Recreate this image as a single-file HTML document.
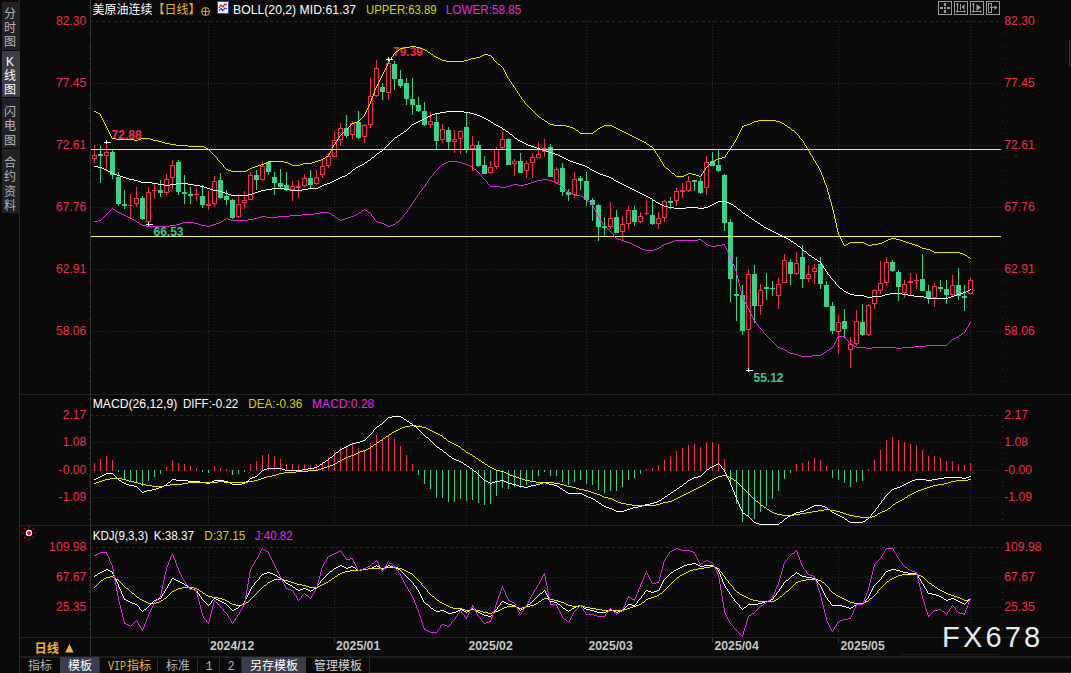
<!DOCTYPE html>
<html><head><meta charset="utf-8"><title>chart</title>
<style>
html,body{margin:0;padding:0;background:#0a0a0a;}
body{width:1071px;height:673px;overflow:hidden;}
svg{display:block}
.t{font:12.2px "Liberation Sans",sans-serif}
.b{font:bold 12px "Liberation Sans",sans-serif}
.cj{font:12px "Liberation Sans","Noto Sans CJK SC",sans-serif}
.cjb{font:bold 12.5px "Liberation Sans","Noto Sans CJK SC",sans-serif}
.sim{font:12px "Liberation Mono","Noto Sans CJK SC",monospace}
</style></head><body>
<svg width="1071" height="673" viewBox="0 0 1071 673">
<g shape-rendering="crispEdges"><rect x="0" y="0" width="1071" height="673" fill="#0a0a0a"/>
<line x1="90" y1="21.5" x2="1003" y2="21.5" stroke="#282828" stroke-width="1" stroke-dasharray="3 3"/>
<line x1="91" y1="83.5" x2="1003" y2="83.5" stroke="#2c2c2c" stroke-width="1" stroke-dasharray="1 2"/>
<line x1="91" y1="145.5" x2="1003" y2="145.5" stroke="#2c2c2c" stroke-width="1" stroke-dasharray="1 2"/>
<line x1="91" y1="207.5" x2="1003" y2="207.5" stroke="#2c2c2c" stroke-width="1" stroke-dasharray="1 2"/>
<line x1="91" y1="269.5" x2="1003" y2="269.5" stroke="#2c2c2c" stroke-width="1" stroke-dasharray="1 2"/>
<line x1="91" y1="331.5" x2="1003" y2="331.5" stroke="#2c2c2c" stroke-width="1" stroke-dasharray="1 2"/>
<line x1="90" y1="415.5" x2="1003" y2="415.5" stroke="#282828" stroke-width="1" stroke-dasharray="3 3"/>
<line x1="91" y1="442.5" x2="1003" y2="442.5" stroke="#2c2c2c" stroke-width="1" stroke-dasharray="1 2"/>
<line x1="91" y1="470.5" x2="1003" y2="470.5" stroke="#2c2c2c" stroke-width="1" stroke-dasharray="1 2"/>
<line x1="91" y1="497.5" x2="1003" y2="497.5" stroke="#2c2c2c" stroke-width="1" stroke-dasharray="1 2"/>
<line x1="90" y1="547.5" x2="1003" y2="547.5" stroke="#282828" stroke-width="1" stroke-dasharray="3 3"/>
<line x1="91" y1="577.5" x2="1003" y2="577.5" stroke="#2c2c2c" stroke-width="1" stroke-dasharray="1 2"/>
<line x1="91" y1="607.5" x2="1003" y2="607.5" stroke="#2c2c2c" stroke-width="1" stroke-dasharray="1 2"/>
<line x1="208.5" y1="21" x2="208.5" y2="394" stroke="#2c2c2c" stroke-width="1" stroke-dasharray="1 2"/>
<line x1="208.5" y1="415" x2="208.5" y2="525" stroke="#2c2c2c" stroke-width="1" stroke-dasharray="1 2"/>
<line x1="208.5" y1="547" x2="208.5" y2="637" stroke="#2c2c2c" stroke-width="1" stroke-dasharray="1 2"/>
<line x1="334.5" y1="21" x2="334.5" y2="394" stroke="#2c2c2c" stroke-width="1" stroke-dasharray="1 2"/>
<line x1="334.5" y1="415" x2="334.5" y2="525" stroke="#2c2c2c" stroke-width="1" stroke-dasharray="1 2"/>
<line x1="334.5" y1="547" x2="334.5" y2="637" stroke="#2c2c2c" stroke-width="1" stroke-dasharray="1 2"/>
<line x1="466.5" y1="21" x2="466.5" y2="394" stroke="#2c2c2c" stroke-width="1" stroke-dasharray="1 2"/>
<line x1="466.5" y1="415" x2="466.5" y2="525" stroke="#2c2c2c" stroke-width="1" stroke-dasharray="1 2"/>
<line x1="466.5" y1="547" x2="466.5" y2="637" stroke="#2c2c2c" stroke-width="1" stroke-dasharray="1 2"/>
<line x1="586.5" y1="21" x2="586.5" y2="394" stroke="#2c2c2c" stroke-width="1" stroke-dasharray="1 2"/>
<line x1="586.5" y1="415" x2="586.5" y2="525" stroke="#2c2c2c" stroke-width="1" stroke-dasharray="1 2"/>
<line x1="586.5" y1="547" x2="586.5" y2="637" stroke="#2c2c2c" stroke-width="1" stroke-dasharray="1 2"/>
<line x1="712.5" y1="21" x2="712.5" y2="394" stroke="#2c2c2c" stroke-width="1" stroke-dasharray="1 2"/>
<line x1="712.5" y1="415" x2="712.5" y2="525" stroke="#2c2c2c" stroke-width="1" stroke-dasharray="1 2"/>
<line x1="712.5" y1="547" x2="712.5" y2="637" stroke="#2c2c2c" stroke-width="1" stroke-dasharray="1 2"/>
<line x1="838.5" y1="21" x2="838.5" y2="394" stroke="#2c2c2c" stroke-width="1" stroke-dasharray="1 2"/>
<line x1="838.5" y1="415" x2="838.5" y2="525" stroke="#2c2c2c" stroke-width="1" stroke-dasharray="1 2"/>
<line x1="838.5" y1="547" x2="838.5" y2="637" stroke="#2c2c2c" stroke-width="1" stroke-dasharray="1 2"/>
<line x1="970.5" y1="21" x2="970.5" y2="394" stroke="#2c2c2c" stroke-width="1" stroke-dasharray="1 2"/>
<line x1="970.5" y1="415" x2="970.5" y2="525" stroke="#2c2c2c" stroke-width="1" stroke-dasharray="1 2"/>
<line x1="970.5" y1="547" x2="970.5" y2="637" stroke="#2c2c2c" stroke-width="1" stroke-dasharray="1 2"/>
<rect x="90" y="0" width="1" height="657" fill="#333"/>
<rect x="19" y="0" width="1" height="673" fill="#2a2a2a"/>
<rect x="20" y="394" width="1051" height="1" fill="#222222"/>
<rect x="20" y="525" width="1051" height="1" fill="#222222"/>
<rect x="20" y="637" width="1051" height="1" fill="#242424"/>
<rect x="20" y="656" width="1051" height="2" fill="#1e1e1e"/>
<rect x="900" y="654" width="99" height="1" fill="#1c1c1c"/>
<rect x="370" y="672" width="701" height="1" fill="#262626"/>
<rect x="89" y="33" width="1" height="1" fill="#3a3a3a"/>
<rect x="1002" y="33" width="1" height="1" fill="#3a3a3a"/>
<rect x="89" y="46" width="1" height="1" fill="#3a3a3a"/>
<rect x="1002" y="46" width="1" height="1" fill="#3a3a3a"/>
<rect x="89" y="58" width="1" height="1" fill="#3a3a3a"/>
<rect x="1002" y="58" width="1" height="1" fill="#3a3a3a"/>
<rect x="89" y="71" width="1" height="1" fill="#3a3a3a"/>
<rect x="1002" y="71" width="1" height="1" fill="#3a3a3a"/>
<rect x="89" y="95" width="1" height="1" fill="#3a3a3a"/>
<rect x="1002" y="95" width="1" height="1" fill="#3a3a3a"/>
<rect x="89" y="108" width="1" height="1" fill="#3a3a3a"/>
<rect x="1002" y="108" width="1" height="1" fill="#3a3a3a"/>
<rect x="89" y="120" width="1" height="1" fill="#3a3a3a"/>
<rect x="1002" y="120" width="1" height="1" fill="#3a3a3a"/>
<rect x="89" y="133" width="1" height="1" fill="#3a3a3a"/>
<rect x="1002" y="133" width="1" height="1" fill="#3a3a3a"/>
<rect x="89" y="157" width="1" height="1" fill="#3a3a3a"/>
<rect x="1002" y="157" width="1" height="1" fill="#3a3a3a"/>
<rect x="89" y="170" width="1" height="1" fill="#3a3a3a"/>
<rect x="1002" y="170" width="1" height="1" fill="#3a3a3a"/>
<rect x="89" y="182" width="1" height="1" fill="#3a3a3a"/>
<rect x="1002" y="182" width="1" height="1" fill="#3a3a3a"/>
<rect x="89" y="195" width="1" height="1" fill="#3a3a3a"/>
<rect x="1002" y="195" width="1" height="1" fill="#3a3a3a"/>
<rect x="89" y="219" width="1" height="1" fill="#3a3a3a"/>
<rect x="1002" y="219" width="1" height="1" fill="#3a3a3a"/>
<rect x="89" y="232" width="1" height="1" fill="#3a3a3a"/>
<rect x="1002" y="232" width="1" height="1" fill="#3a3a3a"/>
<rect x="89" y="244" width="1" height="1" fill="#3a3a3a"/>
<rect x="1002" y="244" width="1" height="1" fill="#3a3a3a"/>
<rect x="89" y="257" width="1" height="1" fill="#3a3a3a"/>
<rect x="1002" y="257" width="1" height="1" fill="#3a3a3a"/>
<rect x="89" y="281" width="1" height="1" fill="#3a3a3a"/>
<rect x="1002" y="281" width="1" height="1" fill="#3a3a3a"/>
<rect x="89" y="294" width="1" height="1" fill="#3a3a3a"/>
<rect x="1002" y="294" width="1" height="1" fill="#3a3a3a"/>
<rect x="89" y="306" width="1" height="1" fill="#3a3a3a"/>
<rect x="1002" y="306" width="1" height="1" fill="#3a3a3a"/>
<rect x="89" y="319" width="1" height="1" fill="#3a3a3a"/>
<rect x="1002" y="319" width="1" height="1" fill="#3a3a3a"/>
<rect x="89" y="343" width="1" height="1" fill="#3a3a3a"/>
<rect x="1002" y="343" width="1" height="1" fill="#3a3a3a"/>
<rect x="89" y="356" width="1" height="1" fill="#3a3a3a"/>
<rect x="1002" y="356" width="1" height="1" fill="#3a3a3a"/>
<rect x="89" y="368" width="1" height="1" fill="#3a3a3a"/>
<rect x="1002" y="368" width="1" height="1" fill="#3a3a3a"/>
<rect x="89" y="381" width="1" height="1" fill="#3a3a3a"/>
<rect x="1002" y="381" width="1" height="1" fill="#3a3a3a"/>
<rect x="89" y="420" width="1" height="1" fill="#3a3a3a"/>
<rect x="1002" y="420" width="1" height="1" fill="#3a3a3a"/>
<rect x="89" y="426" width="1" height="1" fill="#3a3a3a"/>
<rect x="1002" y="426" width="1" height="1" fill="#3a3a3a"/>
<rect x="89" y="431" width="1" height="1" fill="#3a3a3a"/>
<rect x="1002" y="431" width="1" height="1" fill="#3a3a3a"/>
<rect x="89" y="437" width="1" height="1" fill="#3a3a3a"/>
<rect x="1002" y="437" width="1" height="1" fill="#3a3a3a"/>
<rect x="89" y="447" width="1" height="1" fill="#3a3a3a"/>
<rect x="1002" y="447" width="1" height="1" fill="#3a3a3a"/>
<rect x="89" y="453" width="1" height="1" fill="#3a3a3a"/>
<rect x="1002" y="453" width="1" height="1" fill="#3a3a3a"/>
<rect x="89" y="458" width="1" height="1" fill="#3a3a3a"/>
<rect x="1002" y="458" width="1" height="1" fill="#3a3a3a"/>
<rect x="89" y="464" width="1" height="1" fill="#3a3a3a"/>
<rect x="1002" y="464" width="1" height="1" fill="#3a3a3a"/>
<rect x="89" y="475" width="1" height="1" fill="#3a3a3a"/>
<rect x="1002" y="475" width="1" height="1" fill="#3a3a3a"/>
<rect x="89" y="481" width="1" height="1" fill="#3a3a3a"/>
<rect x="1002" y="481" width="1" height="1" fill="#3a3a3a"/>
<rect x="89" y="486" width="1" height="1" fill="#3a3a3a"/>
<rect x="1002" y="486" width="1" height="1" fill="#3a3a3a"/>
<rect x="89" y="492" width="1" height="1" fill="#3a3a3a"/>
<rect x="1002" y="492" width="1" height="1" fill="#3a3a3a"/>
<rect x="89" y="502" width="1" height="1" fill="#3a3a3a"/>
<rect x="1002" y="502" width="1" height="1" fill="#3a3a3a"/>
<rect x="89" y="508" width="1" height="1" fill="#3a3a3a"/>
<rect x="1002" y="508" width="1" height="1" fill="#3a3a3a"/>
<rect x="89" y="513" width="1" height="1" fill="#3a3a3a"/>
<rect x="1002" y="513" width="1" height="1" fill="#3a3a3a"/>
<rect x="89" y="519" width="1" height="1" fill="#3a3a3a"/>
<rect x="1002" y="519" width="1" height="1" fill="#3a3a3a"/>
<rect x="89" y="555" width="1" height="1" fill="#3a3a3a"/>
<rect x="1002" y="555" width="1" height="1" fill="#3a3a3a"/>
<rect x="89" y="562" width="1" height="1" fill="#3a3a3a"/>
<rect x="1002" y="562" width="1" height="1" fill="#3a3a3a"/>
<rect x="89" y="569" width="1" height="1" fill="#3a3a3a"/>
<rect x="1002" y="569" width="1" height="1" fill="#3a3a3a"/>
<rect x="89" y="585" width="1" height="1" fill="#3a3a3a"/>
<rect x="1002" y="585" width="1" height="1" fill="#3a3a3a"/>
<rect x="89" y="592" width="1" height="1" fill="#3a3a3a"/>
<rect x="1002" y="592" width="1" height="1" fill="#3a3a3a"/>
<rect x="89" y="599" width="1" height="1" fill="#3a3a3a"/>
<rect x="1002" y="599" width="1" height="1" fill="#3a3a3a"/>
<rect x="89" y="615" width="1" height="1" fill="#3a3a3a"/>
<rect x="1002" y="615" width="1" height="1" fill="#3a3a3a"/>
<rect x="89" y="622" width="1" height="1" fill="#3a3a3a"/>
<rect x="1002" y="622" width="1" height="1" fill="#3a3a3a"/>
<rect x="89" y="629" width="1" height="1" fill="#3a3a3a"/>
<rect x="1002" y="629" width="1" height="1" fill="#3a3a3a"/>
<rect x="208" y="638" width="1" height="5" fill="#333"/>
<rect x="334" y="638" width="1" height="5" fill="#333"/>
<rect x="466" y="638" width="1" height="5" fill="#333"/>
<rect x="586" y="638" width="1" height="5" fill="#333"/>
<rect x="712" y="638" width="1" height="5" fill="#333"/>
<rect x="838" y="638" width="1" height="5" fill="#333"/>
<rect x="94" y="145" width="1" height="18" fill="#f03250"/>
<rect x="92.5" y="155.5" width="4" height="3" fill="#0a0a0a" stroke="#f03250" stroke-width="1"/>
<rect x="100" y="146" width="1" height="37" fill="#3cd28c"/>
<rect x="98" y="154" width="5" height="2" fill="#3cd28c"/>
<rect x="106" y="143" width="1" height="27" fill="#f03250"/>
<rect x="104.5" y="152.5" width="4" height="3" fill="#0a0a0a" stroke="#f03250" stroke-width="1"/>
<rect x="112" y="150" width="1" height="29" fill="#3cd28c"/>
<rect x="110" y="152" width="5" height="23" fill="#3cd28c"/>
<rect x="118" y="172" width="1" height="34" fill="#3cd28c"/>
<rect x="116" y="177" width="5" height="27" fill="#3cd28c"/>
<rect x="124" y="190" width="1" height="19" fill="#3cd28c"/>
<rect x="122" y="204" width="5" height="2" fill="#3cd28c"/>
<rect x="130" y="194" width="1" height="25" fill="#f03250"/>
<rect x="128" y="205" width="5" height="1" fill="#f03250"/>
<rect x="136" y="187" width="1" height="20" fill="#f03250"/>
<rect x="134.5" y="198.5" width="4" height="5" fill="#0a0a0a" stroke="#f03250" stroke-width="1"/>
<rect x="142" y="196" width="1" height="24" fill="#3cd28c"/>
<rect x="140" y="198" width="5" height="21" fill="#3cd28c"/>
<rect x="148" y="187" width="1" height="38" fill="#f03250"/>
<rect x="146.5" y="192.5" width="4" height="29" fill="#0a0a0a" stroke="#f03250" stroke-width="1"/>
<rect x="154" y="184" width="1" height="15" fill="#f03250"/>
<rect x="152" y="190" width="5" height="1" fill="#f03250"/>
<rect x="160" y="180" width="1" height="17" fill="#3cd28c"/>
<rect x="158" y="190" width="5" height="3" fill="#3cd28c"/>
<rect x="166" y="174" width="1" height="21" fill="#f03250"/>
<rect x="164.5" y="179.5" width="4" height="13" fill="#0a0a0a" stroke="#f03250" stroke-width="1"/>
<rect x="172" y="160" width="1" height="29" fill="#f03250"/>
<rect x="170.5" y="165.5" width="4" height="12" fill="#0a0a0a" stroke="#f03250" stroke-width="1"/>
<rect x="178" y="160" width="1" height="35" fill="#3cd28c"/>
<rect x="176" y="162" width="5" height="30" fill="#3cd28c"/>
<rect x="184" y="175" width="1" height="29" fill="#3cd28c"/>
<rect x="182" y="192" width="5" height="2" fill="#3cd28c"/>
<rect x="190" y="187" width="1" height="17" fill="#3cd28c"/>
<rect x="188" y="194" width="5" height="2" fill="#3cd28c"/>
<rect x="196" y="188" width="1" height="13" fill="#f03250"/>
<rect x="194" y="194" width="5" height="1" fill="#f03250"/>
<rect x="202" y="185" width="1" height="23" fill="#3cd28c"/>
<rect x="200" y="196" width="5" height="9" fill="#3cd28c"/>
<rect x="208" y="191" width="1" height="19" fill="#f03250"/>
<rect x="206" y="204" width="5" height="2" fill="#f03250"/>
<rect x="214" y="176" width="1" height="31" fill="#f03250"/>
<rect x="212.5" y="181.5" width="4" height="22" fill="#0a0a0a" stroke="#f03250" stroke-width="1"/>
<rect x="220" y="173" width="1" height="26" fill="#3cd28c"/>
<rect x="218" y="180" width="5" height="18" fill="#3cd28c"/>
<rect x="226" y="190" width="1" height="15" fill="#3cd28c"/>
<rect x="224" y="196" width="5" height="4" fill="#3cd28c"/>
<rect x="232" y="199" width="1" height="20" fill="#3cd28c"/>
<rect x="230" y="200" width="5" height="18" fill="#3cd28c"/>
<rect x="238" y="194" width="1" height="24" fill="#f03250"/>
<rect x="236.5" y="204.5" width="4" height="12" fill="#0a0a0a" stroke="#f03250" stroke-width="1"/>
<rect x="244" y="191" width="1" height="18" fill="#f03250"/>
<rect x="242.5" y="200.5" width="4" height="2" fill="#0a0a0a" stroke="#f03250" stroke-width="1"/>
<rect x="250" y="172" width="1" height="28" fill="#f03250"/>
<rect x="248.5" y="175.5" width="4" height="24" fill="#0a0a0a" stroke="#f03250" stroke-width="1"/>
<rect x="256" y="170" width="1" height="20" fill="#3cd28c"/>
<rect x="254" y="175" width="5" height="5" fill="#3cd28c"/>
<rect x="262" y="161" width="1" height="20" fill="#f03250"/>
<rect x="260.5" y="166.5" width="4" height="13" fill="#0a0a0a" stroke="#f03250" stroke-width="1"/>
<rect x="268" y="161" width="1" height="14" fill="#3cd28c"/>
<rect x="266" y="162" width="5" height="10" fill="#3cd28c"/>
<rect x="274" y="172" width="1" height="23" fill="#3cd28c"/>
<rect x="272" y="177" width="5" height="6" fill="#3cd28c"/>
<rect x="280" y="169" width="1" height="19" fill="#3cd28c"/>
<rect x="278" y="183" width="5" height="4" fill="#3cd28c"/>
<rect x="286" y="172" width="1" height="19" fill="#3cd28c"/>
<rect x="284" y="185" width="5" height="4" fill="#3cd28c"/>
<rect x="292" y="181" width="1" height="20" fill="#f03250"/>
<rect x="290.5" y="186.5" width="4" height="3" fill="#0a0a0a" stroke="#f03250" stroke-width="1"/>
<rect x="298" y="180" width="1" height="18" fill="#f03250"/>
<rect x="296" y="186" width="5" height="2" fill="#f03250"/>
<rect x="304" y="174" width="1" height="13" fill="#f03250"/>
<rect x="302.5" y="178.5" width="4" height="7" fill="#0a0a0a" stroke="#f03250" stroke-width="1"/>
<rect x="310" y="170" width="1" height="18" fill="#3cd28c"/>
<rect x="308" y="178" width="5" height="7" fill="#3cd28c"/>
<rect x="316" y="170" width="1" height="15" fill="#f03250"/>
<rect x="314.5" y="177.5" width="4" height="6" fill="#0a0a0a" stroke="#f03250" stroke-width="1"/>
<rect x="322" y="160" width="1" height="18" fill="#f03250"/>
<rect x="320.5" y="166.5" width="4" height="8" fill="#0a0a0a" stroke="#f03250" stroke-width="1"/>
<rect x="328" y="153" width="1" height="15" fill="#f03250"/>
<rect x="326.5" y="156.5" width="4" height="9" fill="#0a0a0a" stroke="#f03250" stroke-width="1"/>
<rect x="334" y="131" width="1" height="26" fill="#f03250"/>
<rect x="332.5" y="140.5" width="4" height="16" fill="#0a0a0a" stroke="#f03250" stroke-width="1"/>
<rect x="340" y="123" width="1" height="23" fill="#f03250"/>
<rect x="338.5" y="128.5" width="4" height="11" fill="#0a0a0a" stroke="#f03250" stroke-width="1"/>
<rect x="346" y="115" width="1" height="23" fill="#3cd28c"/>
<rect x="344" y="128" width="5" height="8" fill="#3cd28c"/>
<rect x="352" y="121" width="1" height="18" fill="#f03250"/>
<rect x="350.5" y="123.5" width="4" height="11" fill="#0a0a0a" stroke="#f03250" stroke-width="1"/>
<rect x="358" y="111" width="1" height="28" fill="#3cd28c"/>
<rect x="356" y="122" width="5" height="16" fill="#3cd28c"/>
<rect x="364" y="124" width="1" height="19" fill="#f03250"/>
<rect x="362.5" y="125.5" width="4" height="11" fill="#0a0a0a" stroke="#f03250" stroke-width="1"/>
<rect x="370" y="78" width="1" height="50" fill="#f03250"/>
<rect x="368.5" y="96.5" width="4" height="28" fill="#0a0a0a" stroke="#f03250" stroke-width="1"/>
<rect x="376" y="60" width="1" height="37" fill="#f03250"/>
<rect x="374.5" y="68.5" width="4" height="27" fill="#0a0a0a" stroke="#f03250" stroke-width="1"/>
<rect x="382" y="83" width="1" height="17" fill="#3cd28c"/>
<rect x="380" y="87" width="5" height="5" fill="#3cd28c"/>
<rect x="388" y="58" width="1" height="42" fill="#f03250"/>
<rect x="386.5" y="63.5" width="4" height="29" fill="#0a0a0a" stroke="#f03250" stroke-width="1"/>
<rect x="394" y="61" width="1" height="29" fill="#3cd28c"/>
<rect x="392" y="64" width="5" height="15" fill="#3cd28c"/>
<rect x="400" y="70" width="1" height="18" fill="#3cd28c"/>
<rect x="398" y="79" width="5" height="7" fill="#3cd28c"/>
<rect x="406" y="78" width="1" height="27" fill="#3cd28c"/>
<rect x="404" y="83" width="5" height="16" fill="#3cd28c"/>
<rect x="412" y="78" width="1" height="37" fill="#3cd28c"/>
<rect x="410" y="99" width="5" height="6" fill="#3cd28c"/>
<rect x="418" y="97" width="1" height="15" fill="#3cd28c"/>
<rect x="416" y="105" width="5" height="6" fill="#3cd28c"/>
<rect x="424" y="102" width="1" height="24" fill="#3cd28c"/>
<rect x="422" y="111" width="5" height="14" fill="#3cd28c"/>
<rect x="430" y="112" width="1" height="16" fill="#f03250"/>
<rect x="428.5" y="121.5" width="4" height="3" fill="#0a0a0a" stroke="#f03250" stroke-width="1"/>
<rect x="436" y="113" width="1" height="36" fill="#3cd28c"/>
<rect x="434" y="122" width="5" height="19" fill="#3cd28c"/>
<rect x="442" y="124" width="1" height="19" fill="#f03250"/>
<rect x="440.5" y="129.5" width="4" height="10" fill="#0a0a0a" stroke="#f03250" stroke-width="1"/>
<rect x="448" y="127" width="1" height="22" fill="#3cd28c"/>
<rect x="446" y="130" width="5" height="12" fill="#3cd28c"/>
<rect x="454" y="130" width="1" height="23" fill="#f03250"/>
<rect x="452.5" y="139.5" width="4" height="2" fill="#0a0a0a" stroke="#f03250" stroke-width="1"/>
<rect x="460" y="130" width="1" height="24" fill="#f03250"/>
<rect x="458.5" y="131.5" width="4" height="7" fill="#0a0a0a" stroke="#f03250" stroke-width="1"/>
<rect x="466" y="113" width="1" height="40" fill="#3cd28c"/>
<rect x="464" y="127" width="5" height="22" fill="#3cd28c"/>
<rect x="472" y="136" width="1" height="35" fill="#f03250"/>
<rect x="470.5" y="145.5" width="4" height="3" fill="#0a0a0a" stroke="#f03250" stroke-width="1"/>
<rect x="478" y="141" width="1" height="26" fill="#3cd28c"/>
<rect x="476" y="145" width="5" height="21" fill="#3cd28c"/>
<rect x="484" y="156" width="1" height="18" fill="#3cd28c"/>
<rect x="482" y="165" width="5" height="9" fill="#3cd28c"/>
<rect x="490" y="161" width="1" height="13" fill="#f03250"/>
<rect x="488.5" y="167.5" width="4" height="5" fill="#0a0a0a" stroke="#f03250" stroke-width="1"/>
<rect x="496" y="147" width="1" height="22" fill="#f03250"/>
<rect x="494.5" y="149.5" width="4" height="17" fill="#0a0a0a" stroke="#f03250" stroke-width="1"/>
<rect x="502" y="132" width="1" height="17" fill="#f03250"/>
<rect x="500.5" y="139.5" width="4" height="8" fill="#0a0a0a" stroke="#f03250" stroke-width="1"/>
<rect x="508" y="138" width="1" height="27" fill="#3cd28c"/>
<rect x="506" y="139" width="5" height="26" fill="#3cd28c"/>
<rect x="514" y="159" width="1" height="17" fill="#f03250"/>
<rect x="512.5" y="161.5" width="4" height="2" fill="#0a0a0a" stroke="#f03250" stroke-width="1"/>
<rect x="520" y="153" width="1" height="20" fill="#3cd28c"/>
<rect x="518" y="161" width="5" height="12" fill="#3cd28c"/>
<rect x="526" y="161" width="1" height="17" fill="#f03250"/>
<rect x="524.5" y="163.5" width="4" height="7" fill="#0a0a0a" stroke="#f03250" stroke-width="1"/>
<rect x="532" y="153" width="1" height="25" fill="#f03250"/>
<rect x="530.5" y="157.5" width="4" height="5" fill="#0a0a0a" stroke="#f03250" stroke-width="1"/>
<rect x="538" y="142" width="1" height="16" fill="#f03250"/>
<rect x="536.5" y="154.5" width="4" height="3" fill="#0a0a0a" stroke="#f03250" stroke-width="1"/>
<rect x="544" y="139" width="1" height="18" fill="#f03250"/>
<rect x="542.5" y="148.5" width="4" height="3" fill="#0a0a0a" stroke="#f03250" stroke-width="1"/>
<rect x="550" y="144" width="1" height="33" fill="#3cd28c"/>
<rect x="548" y="147" width="5" height="30" fill="#3cd28c"/>
<rect x="556" y="167" width="1" height="17" fill="#f03250"/>
<rect x="554.5" y="169.5" width="4" height="13" fill="#0a0a0a" stroke="#f03250" stroke-width="1"/>
<rect x="562" y="163" width="1" height="33" fill="#3cd28c"/>
<rect x="560" y="168" width="5" height="24" fill="#3cd28c"/>
<rect x="568" y="189" width="1" height="12" fill="#3cd28c"/>
<rect x="566" y="192" width="5" height="3" fill="#3cd28c"/>
<rect x="574" y="172" width="1" height="26" fill="#f03250"/>
<rect x="572.5" y="179.5" width="4" height="15" fill="#0a0a0a" stroke="#f03250" stroke-width="1"/>
<rect x="580" y="176" width="1" height="14" fill="#3cd28c"/>
<rect x="578" y="178" width="5" height="3" fill="#3cd28c"/>
<rect x="586" y="172" width="1" height="34" fill="#3cd28c"/>
<rect x="584" y="181" width="5" height="19" fill="#3cd28c"/>
<rect x="592" y="198" width="1" height="23" fill="#3cd28c"/>
<rect x="590" y="200" width="5" height="5" fill="#3cd28c"/>
<rect x="598" y="204" width="1" height="37" fill="#3cd28c"/>
<rect x="596" y="205" width="5" height="22" fill="#3cd28c"/>
<rect x="604" y="217" width="1" height="19" fill="#3cd28c"/>
<rect x="602" y="226" width="5" height="2" fill="#3cd28c"/>
<rect x="610" y="202" width="1" height="27" fill="#f03250"/>
<rect x="608.5" y="218.5" width="4" height="8" fill="#0a0a0a" stroke="#f03250" stroke-width="1"/>
<rect x="616" y="210" width="1" height="23" fill="#3cd28c"/>
<rect x="614" y="217" width="5" height="16" fill="#3cd28c"/>
<rect x="622" y="216" width="1" height="24" fill="#f03250"/>
<rect x="620.5" y="224.5" width="4" height="7" fill="#0a0a0a" stroke="#f03250" stroke-width="1"/>
<rect x="628" y="206" width="1" height="23" fill="#f03250"/>
<rect x="626.5" y="210.5" width="4" height="13" fill="#0a0a0a" stroke="#f03250" stroke-width="1"/>
<rect x="634" y="206" width="1" height="20" fill="#3cd28c"/>
<rect x="632" y="210" width="5" height="12" fill="#3cd28c"/>
<rect x="640" y="212" width="1" height="11" fill="#f03250"/>
<rect x="638.5" y="216.5" width="4" height="5" fill="#0a0a0a" stroke="#f03250" stroke-width="1"/>
<rect x="646" y="200" width="1" height="15" fill="#f03250"/>
<rect x="644" y="213" width="5" height="1" fill="#f03250"/>
<rect x="652" y="200" width="1" height="25" fill="#3cd28c"/>
<rect x="650" y="215" width="5" height="9" fill="#3cd28c"/>
<rect x="658" y="212" width="1" height="17" fill="#f03250"/>
<rect x="656.5" y="218.5" width="4" height="5" fill="#0a0a0a" stroke="#f03250" stroke-width="1"/>
<rect x="664" y="200" width="1" height="22" fill="#f03250"/>
<rect x="662.5" y="201.5" width="4" height="16" fill="#0a0a0a" stroke="#f03250" stroke-width="1"/>
<rect x="670" y="197" width="1" height="12" fill="#3cd28c"/>
<rect x="668" y="201" width="5" height="2" fill="#3cd28c"/>
<rect x="676" y="188" width="1" height="18" fill="#f03250"/>
<rect x="674.5" y="191.5" width="4" height="9" fill="#0a0a0a" stroke="#f03250" stroke-width="1"/>
<rect x="682" y="183" width="1" height="15" fill="#f03250"/>
<rect x="680" y="190" width="5" height="2" fill="#f03250"/>
<rect x="688" y="176" width="1" height="16" fill="#f03250"/>
<rect x="686.5" y="181.5" width="4" height="9" fill="#0a0a0a" stroke="#f03250" stroke-width="1"/>
<rect x="694" y="180" width="1" height="11" fill="#3cd28c"/>
<rect x="692" y="180" width="5" height="2" fill="#3cd28c"/>
<rect x="700" y="178" width="1" height="16" fill="#3cd28c"/>
<rect x="698" y="181" width="5" height="12" fill="#3cd28c"/>
<rect x="706" y="156" width="1" height="39" fill="#f03250"/>
<rect x="704.5" y="162.5" width="4" height="25" fill="#0a0a0a" stroke="#f03250" stroke-width="1"/>
<rect x="712" y="152" width="1" height="14" fill="#3cd28c"/>
<rect x="710" y="161" width="5" height="5" fill="#3cd28c"/>
<rect x="718" y="150" width="1" height="22" fill="#3cd28c"/>
<rect x="716" y="165" width="5" height="6" fill="#3cd28c"/>
<rect x="724" y="174" width="1" height="57" fill="#3cd28c"/>
<rect x="722" y="175" width="5" height="48" fill="#3cd28c"/>
<rect x="730" y="219" width="1" height="83" fill="#3cd28c"/>
<rect x="728" y="222" width="5" height="57" fill="#3cd28c"/>
<rect x="736" y="257" width="1" height="64" fill="#3cd28c"/>
<rect x="734" y="294" width="5" height="2" fill="#3cd28c"/>
<rect x="742" y="285" width="1" height="50" fill="#3cd28c"/>
<rect x="740" y="295" width="5" height="36" fill="#3cd28c"/>
<rect x="748" y="270" width="1" height="101" fill="#f03250"/>
<rect x="746.5" y="274.5" width="4" height="55" fill="#0a0a0a" stroke="#f03250" stroke-width="1"/>
<rect x="754" y="265" width="1" height="58" fill="#3cd28c"/>
<rect x="752" y="274" width="5" height="32" fill="#3cd28c"/>
<rect x="760" y="284" width="1" height="31" fill="#f03250"/>
<rect x="758.5" y="290.5" width="4" height="15" fill="#0a0a0a" stroke="#f03250" stroke-width="1"/>
<rect x="766" y="273" width="1" height="27" fill="#3cd28c"/>
<rect x="764" y="287" width="5" height="2" fill="#3cd28c"/>
<rect x="772" y="281" width="1" height="15" fill="#3cd28c"/>
<rect x="770" y="288" width="5" height="1" fill="#3cd28c"/>
<rect x="778" y="278" width="1" height="31" fill="#f03250"/>
<rect x="776.5" y="284.5" width="4" height="11" fill="#0a0a0a" stroke="#f03250" stroke-width="1"/>
<rect x="784" y="254" width="1" height="29" fill="#f03250"/>
<rect x="782.5" y="260.5" width="4" height="22" fill="#0a0a0a" stroke="#f03250" stroke-width="1"/>
<rect x="790" y="259" width="1" height="26" fill="#3cd28c"/>
<rect x="788" y="262" width="5" height="12" fill="#3cd28c"/>
<rect x="796" y="252" width="1" height="23" fill="#f03250"/>
<rect x="794.5" y="263.5" width="4" height="10" fill="#0a0a0a" stroke="#f03250" stroke-width="1"/>
<rect x="802" y="245" width="1" height="43" fill="#3cd28c"/>
<rect x="800" y="257" width="5" height="22" fill="#3cd28c"/>
<rect x="808" y="265" width="1" height="17" fill="#f03250"/>
<rect x="806.5" y="274.5" width="4" height="4" fill="#0a0a0a" stroke="#f03250" stroke-width="1"/>
<rect x="814" y="264" width="1" height="20" fill="#f03250"/>
<rect x="812.5" y="268.5" width="4" height="3" fill="#0a0a0a" stroke="#f03250" stroke-width="1"/>
<rect x="820" y="257" width="1" height="32" fill="#3cd28c"/>
<rect x="818" y="264" width="5" height="20" fill="#3cd28c"/>
<rect x="826" y="281" width="1" height="26" fill="#3cd28c"/>
<rect x="824" y="285" width="5" height="22" fill="#3cd28c"/>
<rect x="832" y="302" width="1" height="32" fill="#3cd28c"/>
<rect x="830" y="306" width="5" height="25" fill="#3cd28c"/>
<rect x="838" y="314" width="1" height="40" fill="#f03250"/>
<rect x="836.5" y="322.5" width="4" height="9" fill="#0a0a0a" stroke="#f03250" stroke-width="1"/>
<rect x="844" y="309" width="1" height="29" fill="#3cd28c"/>
<rect x="842" y="321" width="5" height="8" fill="#3cd28c"/>
<rect x="850" y="337" width="1" height="31" fill="#f03250"/>
<rect x="848.5" y="344.5" width="4" height="5" fill="#0a0a0a" stroke="#f03250" stroke-width="1"/>
<rect x="856" y="310" width="1" height="36" fill="#f03250"/>
<rect x="854.5" y="321.5" width="4" height="22" fill="#0a0a0a" stroke="#f03250" stroke-width="1"/>
<rect x="862" y="304" width="1" height="32" fill="#3cd28c"/>
<rect x="860" y="322" width="5" height="13" fill="#3cd28c"/>
<rect x="868" y="304" width="1" height="32" fill="#f03250"/>
<rect x="866.5" y="305.5" width="4" height="29" fill="#0a0a0a" stroke="#f03250" stroke-width="1"/>
<rect x="874" y="289" width="1" height="20" fill="#f03250"/>
<rect x="872.5" y="290.5" width="4" height="13" fill="#0a0a0a" stroke="#f03250" stroke-width="1"/>
<rect x="880" y="261" width="1" height="33" fill="#f03250"/>
<rect x="878.5" y="283.5" width="4" height="7" fill="#0a0a0a" stroke="#f03250" stroke-width="1"/>
<rect x="886" y="257" width="1" height="29" fill="#f03250"/>
<rect x="884.5" y="262.5" width="4" height="20" fill="#0a0a0a" stroke="#f03250" stroke-width="1"/>
<rect x="892" y="260" width="1" height="12" fill="#3cd28c"/>
<rect x="890" y="262" width="5" height="9" fill="#3cd28c"/>
<rect x="898" y="270" width="1" height="31" fill="#3cd28c"/>
<rect x="896" y="272" width="5" height="15" fill="#3cd28c"/>
<rect x="904" y="280" width="1" height="18" fill="#f03250"/>
<rect x="902.5" y="284.5" width="4" height="8" fill="#0a0a0a" stroke="#f03250" stroke-width="1"/>
<rect x="910" y="273" width="1" height="22" fill="#f03250"/>
<rect x="908" y="281" width="5" height="2" fill="#f03250"/>
<rect x="916" y="274" width="1" height="15" fill="#f03250"/>
<rect x="914" y="280" width="5" height="1" fill="#f03250"/>
<rect x="922" y="254" width="1" height="37" fill="#3cd28c"/>
<rect x="920" y="279" width="5" height="12" fill="#3cd28c"/>
<rect x="928" y="285" width="1" height="19" fill="#3cd28c"/>
<rect x="926" y="291" width="5" height="7" fill="#3cd28c"/>
<rect x="934" y="283" width="1" height="24" fill="#f03250"/>
<rect x="932.5" y="286.5" width="4" height="11" fill="#0a0a0a" stroke="#f03250" stroke-width="1"/>
<rect x="940" y="280" width="1" height="12" fill="#3cd28c"/>
<rect x="938" y="287" width="5" height="2" fill="#3cd28c"/>
<rect x="946" y="280" width="1" height="24" fill="#3cd28c"/>
<rect x="944" y="289" width="5" height="6" fill="#3cd28c"/>
<rect x="952" y="275" width="1" height="21" fill="#f03250"/>
<rect x="950.5" y="285.5" width="4" height="9" fill="#0a0a0a" stroke="#f03250" stroke-width="1"/>
<rect x="958" y="268" width="1" height="32" fill="#3cd28c"/>
<rect x="956" y="285" width="5" height="11" fill="#3cd28c"/>
<rect x="964" y="285" width="1" height="26" fill="#3cd28c"/>
<rect x="962" y="296" width="5" height="2" fill="#3cd28c"/>
<rect x="970" y="278" width="1" height="16" fill="#f03250"/>
<rect x="968.5" y="280.5" width="4" height="13" fill="#0a0a0a" stroke="#f03250" stroke-width="1"/>
<text x="111.6" y="139" fill="#ee3048" class="b">72.88</text><text x="393" y="56" fill="#ee3048" class="b">79.39</text><text x="153.5" y="236" fill="#3cc88c" class="b">66.53</text><text x="753.5" y="381.7" fill="#3cc88c" class="b">55.12</text><rect x="91" y="149" width="910" height="1" fill="#f4ee70"/><rect x="91" y="236" width="910" height="1" fill="#f4ee70"/><path d="M94 166h4v1h-4zM98 167h2v1h-2zM100 167h2v1h-2zM102 168h2v1h-2zM104 169h2v1h-2zM106 170h2v1h-2zM108 171h2v1h-2zM110 172h2v1h-2zM112 173h2v1h-2zM114 174h3v1h-3zM117 175h1v1h-1zM118 175h2v1h-2zM120 176h3v1h-3zM123 177h1v1h-1zM124 177h2v1h-2zM126 178h3v1h-3zM129 179h1v1h-1zM130 179h4v1h-4zM134 180h2v1h-2zM136 180h2v1h-2zM138 181h3v1h-3zM141 182h1v1h-1zM142 182h6v1h-6zM148 182h4v1h-4zM152 183h2v1h-2zM154 183h4v1h-4zM158 184h2v1h-2zM160 184h4v1h-4zM164 185h2v1h-2zM166 185h4v1h-4zM170 184h2v1h-2zM172 184h4v1h-4zM176 183h2v1h-2zM178 183h6v1h-6zM184 183h4v1h-4zM188 184h2v1h-2zM190 184h4v1h-4zM194 185h2v1h-2zM196 185h4v1h-4zM200 186h2v1h-2zM202 186h2v1h-2zM204 187h3v1h-3zM207 188h1v1h-1zM208 188h2v1h-2zM210 189h3v1h-3zM213 190h1v1h-1zM214 190h4v1h-4zM218 191h2v1h-2zM220 191h2v1h-2zM222 192h3v1h-3zM225 193h1v1h-1zM226 193h2v1h-2zM228 194h3v1h-3zM231 195h1v1h-1zM232 195h6v1h-6zM238 195h6v1h-6zM244 195h4v1h-4zM248 194h2v1h-2zM250 194h2v1h-2zM252 193h3v1h-3zM255 192h1v1h-1zM256 192h2v1h-2zM258 191h3v1h-3zM261 190h1v1h-1zM262 190h4v1h-4zM266 189h2v1h-2zM268 189h4v1h-4zM272 188h2v1h-2zM274 188h6v1h-6zM280 188h4v1h-4zM284 189h2v1h-2zM286 189h4v1h-4zM290 190h2v1h-2zM292 190h6v1h-6zM298 190h4v1h-4zM302 189h2v1h-2zM304 189h4v1h-4zM308 188h2v1h-2zM310 188h6v1h-6zM316 188h2v1h-2zM318 187h2v1h-2zM320 186h2v1h-2zM322 185h2v1h-2zM324 184h3v1h-3zM327 183h1v1h-1zM328 183h2v1h-2zM330 182h2v1h-2zM332 181h2v1h-2zM334 180h2v1h-2zM336 179h2v1h-2zM338 178h2v1h-2zM340 177h2v1h-2zM342 176h3v1h-3zM345 175h1v1h-1zM346 175h1v1h-1zM347 174h1v1h-1zM348 173h2v1h-2zM350 172h1v1h-1zM351 171h1v1h-1zM352 170h1v1h-1zM353 169h2v1h-2zM355 168h1v1h-1zM356 167h2v1h-2zM358 166h2v1h-2zM360 165h2v1h-2zM362 164h2v1h-2zM364 163h1v1h-1zM365 162h2v1h-2zM367 161h1v1h-1zM368 160h2v1h-2zM370 159h1v1h-1zM371 158h1v1h-1zM372 157h2v1h-2zM374 156h1v1h-1zM375 155h1v1h-1zM376 154h1v1h-1zM377 153h2v1h-2zM379 152h1v1h-1zM380 151h2v1h-2zM382 150h1v1h-1zM383 149h1v1h-1zM384 148h1v1h-1zM385 147h1v1h-1zM386 146h1v1h-1zM387 145h1v1h-1zM388 144h1v1h-1zM389 143h1v1h-1zM390 142h1v1h-1zM391 141h1v1h-1zM392 140h1v1h-1zM393 139h1v1h-1zM394 138h1v1h-1zM395 137h2v1h-2zM397 136h1v1h-1zM398 135h2v1h-2zM400 134h1v1h-1zM401 133h2v1h-2zM403 132h1v1h-1zM404 131h2v1h-2zM406 130h1v1h-1zM407 129h1v1h-1zM408 128h1v1h-1zM409 127h1v1h-1zM410 126h1v1h-1zM411 125h1v1h-1zM412 124h2v1h-2zM414 123h2v1h-2zM416 122h2v1h-2zM418 121h2v1h-2zM420 120h2v1h-2zM422 119h2v1h-2zM424 118h2v1h-2zM426 117h2v1h-2zM428 116h2v1h-2zM430 115h2v1h-2zM432 114h3v1h-3zM435 113h1v1h-1zM436 113h4v1h-4zM440 112h2v1h-2zM442 112h4v1h-4zM446 111h2v1h-2zM448 111h6v1h-6zM454 111h6v1h-6zM460 111h4v1h-4zM464 112h2v1h-2zM466 112h4v1h-4zM470 113h2v1h-2zM472 113h2v1h-2zM474 114h3v1h-3zM477 115h1v1h-1zM478 115h2v1h-2zM480 116h2v1h-2zM482 117h2v1h-2zM484 118h2v1h-2zM486 119h2v1h-2zM488 120h2v1h-2zM490 121h1v1h-1zM491 122h2v1h-2zM493 123h1v1h-1zM494 124h2v1h-2zM496 125h2v1h-2zM498 126h2v1h-2zM500 127h2v1h-2zM502 128h1v1h-1zM503 129h2v1h-2zM505 130h1v1h-1zM506 131h2v1h-2zM508 132h1v1h-1zM509 133h1v1h-1zM510 134h2v1h-2zM512 135h1v1h-1zM513 136h1v1h-1zM514 137h1v1h-1zM515 138h2v1h-2zM517 139h1v1h-1zM518 140h2v1h-2zM520 141h2v1h-2zM522 142h2v1h-2zM524 143h2v1h-2zM526 144h2v1h-2zM528 145h3v1h-3zM531 146h1v1h-1zM532 146h2v1h-2zM534 147h3v1h-3zM537 148h1v1h-1zM538 148h2v1h-2zM540 149h3v1h-3zM543 150h1v1h-1zM544 150h2v1h-2zM546 151h3v1h-3zM549 152h1v1h-1zM550 152h2v1h-2zM552 153h3v1h-3zM555 154h1v1h-1zM556 154h2v1h-2zM558 155h2v1h-2zM560 156h2v1h-2zM562 157h2v1h-2zM564 158h2v1h-2zM566 159h2v1h-2zM568 160h2v1h-2zM570 161h3v1h-3zM573 162h1v1h-1zM574 162h2v1h-2zM576 163h3v1h-3zM579 164h1v1h-1zM580 164h2v1h-2zM582 165h3v1h-3zM585 166h1v1h-1zM586 166h1v1h-1zM587 167h2v1h-2zM589 168h1v1h-1zM590 169h2v1h-2zM592 170h2v1h-2zM594 171h2v1h-2zM596 172h2v1h-2zM598 173h2v1h-2zM600 174h3v1h-3zM603 175h1v1h-1zM604 175h2v1h-2zM606 176h3v1h-3zM609 177h1v1h-1zM610 177h1v1h-1zM611 178h2v1h-2zM613 179h1v1h-1zM614 180h2v1h-2zM616 181h2v1h-2zM618 182h2v1h-2zM620 183h2v1h-2zM622 184h2v1h-2zM624 185h2v1h-2zM626 186h2v1h-2zM628 187h2v1h-2zM630 188h2v1h-2zM632 189h2v1h-2zM634 190h2v1h-2zM636 191h2v1h-2zM638 192h2v1h-2zM640 193h2v1h-2zM642 194h2v1h-2zM644 195h2v1h-2zM646 196h2v1h-2zM648 197h2v1h-2zM650 198h2v1h-2zM652 199h1v1h-1zM653 200h2v1h-2zM655 201h1v1h-1zM656 202h2v1h-2zM658 203h2v1h-2zM660 204h2v1h-2zM662 205h2v1h-2zM664 206h4v1h-4zM668 207h2v1h-2zM670 207h4v1h-4zM674 208h2v1h-2zM676 208h6v1h-6zM682 208h4v1h-4zM686 207h2v1h-2zM688 207h6v1h-6zM694 207h4v1h-4zM698 208h2v1h-2zM700 208h4v1h-4zM704 207h2v1h-2zM706 207h2v1h-2zM708 206h2v1h-2zM710 205h2v1h-2zM712 204h2v1h-2zM714 203h2v1h-2zM716 202h2v1h-2zM718 201h6v1h-6zM724 201h2v1h-2zM726 202h3v1h-3zM729 203h1v1h-1zM730 203h1v1h-1zM731 204h2v1h-2zM733 205h1v1h-1zM734 206h2v1h-2zM736 207h1v1h-1zM737 208h1v1h-1zM738 209h2v1h-2zM740 210h1v1h-1zM741 211h1v1h-1zM742 212h1v1h-1zM743 213h2v1h-2zM745 214h1v1h-1zM746 215h2v1h-2zM748 216h1v1h-1zM749 217h2v1h-2zM751 218h1v1h-1zM752 219h2v1h-2zM754 220h1v1h-1zM755 221h2v1h-2zM757 222h1v1h-1zM758 223h2v1h-2zM760 224h1v1h-1zM761 225h2v1h-2zM763 226h1v1h-1zM764 227h2v1h-2zM766 228h2v1h-2zM768 229h2v1h-2zM770 230h2v1h-2zM772 231h2v1h-2zM774 232h2v1h-2zM776 233h2v1h-2zM778 234h2v1h-2zM780 235h2v1h-2zM782 236h2v1h-2zM784 237h2v1h-2zM786 238h2v1h-2zM788 239h2v1h-2zM790 240h1v1h-1zM791 241h2v1h-2zM793 242h1v1h-1zM794 243h2v1h-2zM796 244h1v1h-1zM797 245h1v1h-1zM798 246h2v1h-2zM800 247h1v1h-1zM801 248h1v1h-1zM802 249h1v1h-1zM803 250h1v1h-1zM804 251h2v1h-2zM806 252h1v1h-1zM807 253h1v1h-1zM808 254h1v1h-1zM809 255h2v1h-2zM811 256h1v1h-1zM812 257h2v1h-2zM814 258h1v1h-1zM815 259h2v1h-2zM817 260h1v1h-1zM818 261h2v1h-2zM820 262v1h1v-1zM821 263v2h1v-2zM822 265v1h1v-1zM823 266v2h1v-2zM824 268v1h1v-1zM825 269v2h1v-2zM826 271v1h1v-1zM827 272v2h1v-2zM828 274v1h1v-1zM829 275v1h1v-1zM830 276v2h1v-2zM831 278v1h1v-1zM832 279v1h1v-1zM833 280v1h1v-1zM834 281v1h1v-1zM835 282v2h1v-2zM836 284v1h1v-1zM837 285v1h1v-1zM838 286h1v1h-1zM839 287h1v1h-1zM840 288h2v1h-2zM842 289h1v1h-1zM843 290h1v1h-1zM844 291h2v1h-2zM846 292h2v1h-2zM848 293h2v1h-2zM850 294h4v1h-4zM854 295h2v1h-2zM856 295h6v1h-6zM862 295h2v1h-2zM864 296h3v1h-3zM867 297h1v1h-1zM868 297h4v1h-4zM872 296h2v1h-2zM874 296h6v1h-6zM880 296h2v1h-2zM882 295h3v1h-3zM885 294h1v1h-1zM886 294h4v1h-4zM890 293h2v1h-2zM892 293h6v1h-6zM898 293h4v1h-4zM902 294h2v1h-2zM904 294h4v1h-4zM908 295h2v1h-2zM910 295h4v1h-4zM914 296h2v1h-2zM916 296h6v1h-6zM922 296h2v1h-2zM924 297h3v1h-3zM927 298h1v1h-1zM928 298h6v1h-6zM934 298h6v1h-6zM940 298h6v1h-6zM946 298h2v1h-2zM948 297h3v1h-3zM951 296h1v1h-1zM952 296h2v1h-2zM954 295h3v1h-3zM957 294h1v1h-1zM958 294h2v1h-2zM960 293h3v1h-3zM963 292h1v1h-1zM964 292h2v1h-2zM966 291h2v1h-2zM968 290h2v1h-2zM970 289h1v1h-1z" fill="#ffffff"/><path d="M94 111h2v1h-2zM96 112h2v1h-2zM98 113h2v1h-2zM100 114v2h1v-2zM101 116v2h1v-2zM102 118v2h1v-2zM103 120v2h1v-2zM104 122v2h1v-2zM105 124v2h1v-2zM106 126v1h1v-1zM106 127v1h1v-1zM107 128v2h1v-2zM108 130v2h1v-2zM109 132v2h1v-2zM110 134v2h1v-2zM111 136v2h1v-2zM112 138h4v1h-4zM116 139h2v1h-2zM118 139h6v1h-6zM124 139h6v1h-6zM130 139h4v1h-4zM134 140h2v1h-2zM136 140h2v1h-2zM138 139h3v1h-3zM141 138h1v1h-1zM142 138h6v1h-6zM148 138h2v1h-2zM150 139h3v1h-3zM153 140h1v1h-1zM154 140h4v1h-4zM158 141h2v1h-2zM160 141h2v1h-2zM162 142h3v1h-3zM165 143h1v1h-1zM166 143h4v1h-4zM170 144h2v1h-2zM172 144h4v1h-4zM176 145h2v1h-2zM178 145h6v1h-6zM184 145h4v1h-4zM188 146h2v1h-2zM190 146h6v1h-6zM196 146h6v1h-6zM202 146h2v1h-2zM204 147h2v1h-2zM206 148h2v1h-2zM208 149h1v1h-1zM209 150h1v1h-1zM210 151h1v1h-1zM211 152h1v1h-1zM212 153h1v1h-1zM213 154h1v1h-1zM214 155v1h1v-1zM215 156v1h1v-1zM216 157v1h1v-1zM217 158v2h1v-2zM218 160v1h1v-1zM219 161v1h1v-1zM220 162v1h1v-1zM221 163v1h1v-1zM222 164v1h1v-1zM223 165v2h1v-2zM224 167v1h1v-1zM225 168v1h1v-1zM226 169h2v1h-2zM228 170h3v1h-3zM231 171h1v1h-1zM232 171h6v1h-6zM238 171h6v1h-6zM244 171h2v1h-2zM246 170h2v1h-2zM248 169h2v1h-2zM250 168h2v1h-2zM252 167h3v1h-3zM255 166h1v1h-1zM256 166h2v1h-2zM258 165h3v1h-3zM261 164h1v1h-1zM262 164h2v1h-2zM264 163h2v1h-2zM266 162h2v1h-2zM268 161h6v1h-6zM274 161h6v1h-6zM280 161h4v1h-4zM284 162h2v1h-2zM286 162h2v1h-2zM288 163h2v1h-2zM290 164h2v1h-2zM292 165h6v1h-6zM298 165h2v1h-2zM300 164h3v1h-3zM303 163h1v1h-1zM304 163h6v1h-6zM310 163h2v1h-2zM312 162h3v1h-3zM315 161h1v1h-1zM316 161h2v1h-2zM318 160h3v1h-3zM321 159h1v1h-1zM322 159h1v1h-1zM323 158h2v1h-2zM325 157h1v1h-1zM326 156h2v1h-2zM328 155v1h1v-1zM329 153v2h1v-2zM330 151v2h1v-2zM331 149v2h1v-2zM332 147v2h1v-2zM333 145v2h1v-2zM334 144v1h1v-1zM335 142v2h1v-2zM336 141v1h1v-1zM337 139v2h1v-2zM338 138v1h1v-1zM339 136v2h1v-2zM340 135h1v1h-1zM341 134h1v1h-1zM342 133h1v1h-1zM343 132h1v1h-1zM344 131h1v1h-1zM345 130h1v1h-1zM346 129h1v1h-1zM347 128h1v1h-1zM348 127h1v1h-1zM349 126h1v1h-1zM350 125h1v1h-1zM351 124h1v1h-1zM352 123h2v1h-2zM354 122h3v1h-3zM357 121h1v1h-1zM358 121h1v1h-1zM359 120h1v1h-1zM360 119h1v1h-1zM361 118h1v1h-1zM362 117h1v1h-1zM363 116h1v1h-1zM364 114v2h1v-2zM365 112v2h1v-2zM366 110v2h1v-2zM367 108v2h1v-2zM368 106v2h1v-2zM369 104v2h1v-2zM370 103v1h1v-1zM370 101v2h1v-2zM371 98v3h1v-3zM372 96v2h1v-2zM373 93v3h1v-3zM374 90v3h1v-3zM375 88v2h1v-2zM376 87v1h1v-1zM376 86v1h1v-1zM377 84v2h1v-2zM378 82v2h1v-2zM379 80v2h1v-2zM380 78v2h1v-2zM381 76v2h1v-2zM382 74v2h1v-2zM383 72v2h1v-2zM384 70v2h1v-2zM385 68v2h1v-2zM386 66v2h1v-2zM387 64v2h1v-2zM388 63v1h1v-1zM388 62v1h1v-1zM389 60v2h1v-2zM390 59v1h1v-1zM391 57v2h1v-2zM392 56v1h1v-1zM393 54v2h1v-2zM394 53h1v1h-1zM395 52h1v1h-1zM396 51h2v1h-2zM398 50h1v1h-1zM399 49h1v1h-1zM400 48h4v1h-4zM404 47h2v1h-2zM406 47h4v1h-4zM410 46h2v1h-2zM412 46h4v1h-4zM416 47h2v1h-2zM418 47h2v1h-2zM420 48h3v1h-3zM423 49h1v1h-1zM424 49h1v1h-1zM425 50h2v1h-2zM427 51h1v1h-1zM428 52h2v1h-2zM430 53h1v1h-1zM431 54h2v1h-2zM433 55h1v1h-1zM434 56h2v1h-2zM436 57h2v1h-2zM438 58h2v1h-2zM440 59h2v1h-2zM442 60h4v1h-4zM446 61h2v1h-2zM448 61h6v1h-6zM454 61h6v1h-6zM460 61h4v1h-4zM464 60h2v1h-2zM466 60h2v1h-2zM468 59h3v1h-3zM471 58h1v1h-1zM472 58h4v1h-4zM476 57h2v1h-2zM478 57h2v1h-2zM480 56h2v1h-2zM482 55h2v1h-2zM484 54h4v1h-4zM488 55h2v1h-2zM490 55v1h1v-1zM491 56v1h1v-1zM492 57v1h1v-1zM493 58v2h1v-2zM494 60v1h1v-1zM495 61v1h1v-1zM496 62h1v1h-1zM497 63h1v1h-1zM498 64h2v1h-2zM500 65h1v1h-1zM501 66h1v1h-1zM502 67v1h1v-1zM503 68v2h1v-2zM504 70v2h1v-2zM505 72v2h1v-2zM506 74v2h1v-2zM507 76v2h1v-2zM508 78v1h1v-1zM509 79v2h1v-2zM510 81v1h1v-1zM511 82v2h1v-2zM512 84v1h1v-1zM513 85v2h1v-2zM514 87v1h1v-1zM515 88v2h1v-2zM516 90v1h1v-1zM517 91v2h1v-2zM518 93v1h1v-1zM519 94v2h1v-2zM520 96v1h1v-1zM521 97v2h1v-2zM522 99v1h1v-1zM523 100v1h1v-1zM524 101v2h1v-2zM525 103v1h1v-1zM526 104h1v1h-1zM527 105h1v1h-1zM528 106h1v1h-1zM529 107h1v1h-1zM530 108h1v1h-1zM531 109h1v1h-1zM532 110h1v1h-1zM533 111h1v1h-1zM534 112h1v1h-1zM535 113h1v1h-1zM536 114h1v1h-1zM537 115h1v1h-1zM538 116h1v1h-1zM539 117h2v1h-2zM541 118h1v1h-1zM542 119h2v1h-2zM544 120h1v1h-1zM545 121h2v1h-2zM547 122h1v1h-1zM548 123h2v1h-2zM550 124h4v1h-4zM554 125h2v1h-2zM556 125h6v1h-6zM562 125h4v1h-4zM566 126h2v1h-2zM568 126h2v1h-2zM570 127h3v1h-3zM573 128h1v1h-1zM574 128h1v1h-1zM575 129h1v1h-1zM576 130h2v1h-2zM578 131h1v1h-1zM579 132h1v1h-1zM580 133h6v1h-6zM586 133h6v1h-6zM592 133h1v1h-1zM593 132h1v1h-1zM594 131h2v1h-2zM596 130h1v1h-1zM597 129h1v1h-1zM598 128h2v1h-2zM600 127h2v1h-2zM602 126h2v1h-2zM604 125h6v1h-6zM610 125h2v1h-2zM612 126h2v1h-2zM614 127h2v1h-2zM616 128h2v1h-2zM618 129h2v1h-2zM620 130h2v1h-2zM622 131h2v1h-2zM624 132h2v1h-2zM626 133h2v1h-2zM628 134h2v1h-2zM630 135h2v1h-2zM632 136h2v1h-2zM634 137h2v1h-2zM636 138h2v1h-2zM638 139h2v1h-2zM640 140h2v1h-2zM642 141h2v1h-2zM644 142h2v1h-2zM646 143h1v1h-1zM647 144h2v1h-2zM649 145h1v1h-1zM650 146h2v1h-2zM652 147v1h1v-1zM653 148v2h1v-2zM654 150v1h1v-1zM655 151v2h1v-2zM656 153v1h1v-1zM657 154v2h1v-2zM658 156v1h1v-1zM659 157v2h1v-2zM660 159v2h1v-2zM661 161v1h1v-1zM662 162v2h1v-2zM663 164v2h1v-2zM664 166h1v1h-1zM665 167h1v1h-1zM666 168h2v1h-2zM668 169h1v1h-1zM669 170h1v1h-1zM670 171h1v1h-1zM671 172h1v1h-1zM672 173h2v1h-2zM674 174h1v1h-1zM675 175h1v1h-1zM676 176h6v1h-6zM682 176h2v1h-2zM684 175h2v1h-2zM686 174h2v1h-2zM688 173h4v1h-4zM692 174h2v1h-2zM694 174h2v1h-2zM696 175h3v1h-3zM699 176h1v1h-1zM700 176v1h1v-1zM701 174v2h1v-2zM702 173v1h1v-1zM703 171v2h1v-2zM704 170v1h1v-1zM705 168v2h1v-2zM706 167h1v1h-1zM707 166h1v1h-1zM708 165h1v1h-1zM709 164h1v1h-1zM710 163h1v1h-1zM711 162h1v1h-1zM712 161h2v1h-2zM714 160h2v1h-2zM716 159h2v1h-2zM718 158h4v1h-4zM722 157h2v1h-2zM724 157v1h1v-1zM725 155v2h1v-2zM726 154v1h1v-1zM727 152v2h1v-2zM728 151v1h1v-1zM729 149v2h1v-2zM730 148v1h1v-1zM731 146v2h1v-2zM732 145v1h1v-1zM733 143v2h1v-2zM734 142v1h1v-1zM735 140v2h1v-2zM736 138v2h1v-2zM737 136v2h1v-2zM738 134v2h1v-2zM739 132v2h1v-2zM740 130v2h1v-2zM741 128v2h1v-2zM742 127v1h1v-1zM742 126h2v1h-2zM744 125h3v1h-3zM747 124h1v1h-1zM748 124h2v1h-2zM750 123h2v1h-2zM752 122h2v1h-2zM754 121h4v1h-4zM758 120h2v1h-2zM760 120h6v1h-6zM766 120h6v1h-6zM772 120h4v1h-4zM776 121h2v1h-2zM778 121h2v1h-2zM780 122h2v1h-2zM782 123h2v1h-2zM784 124h1v1h-1zM785 125h2v1h-2zM787 126h1v1h-1zM788 127h2v1h-2zM790 128h1v1h-1zM791 129h1v1h-1zM792 130h2v1h-2zM794 131h1v1h-1zM795 132h1v1h-1zM796 133v1h1v-1zM797 134v1h1v-1zM798 135v1h1v-1zM799 136v2h1v-2zM800 138v1h1v-1zM801 139v1h1v-1zM802 140v1h1v-1zM803 141v2h1v-2zM804 143v2h1v-2zM805 145v1h1v-1zM806 146v2h1v-2zM807 148v2h1v-2zM808 150v1h1v-1zM809 151v2h1v-2zM810 153v2h1v-2zM811 155v1h1v-1zM812 156v2h1v-2zM813 158v2h1v-2zM814 160v1h1v-1zM815 161v2h1v-2zM816 163v2h1v-2zM817 165v1h1v-1zM818 166v2h1v-2zM819 168v2h1v-2zM820 170v2h1v-2zM821 172v3h1v-3zM822 175v2h1v-2zM823 177v3h1v-3zM824 180v3h1v-3zM825 183v2h1v-2zM826 185v1h1v-1zM826 186v2h1v-2zM827 188v4h1v-4zM828 192v3h1v-3zM829 195v4h1v-4zM830 199v3h1v-3zM831 202v4h1v-4zM832 206v1h1v-1zM832 207v3h1v-3zM833 210v4h1v-4zM834 214v5h1v-5zM835 219v4h1v-4zM836 223v5h1v-5zM837 228v4h1v-4zM838 232v2h1v-2zM838 234v1h1v-1zM839 235v2h1v-2zM840 237v2h1v-2zM841 239v2h1v-2zM842 241v2h1v-2zM843 243v2h1v-2zM844 245h2v1h-2zM846 244h2v1h-2zM848 243h2v1h-2zM850 242h6v1h-6zM856 242h6v1h-6zM862 242h2v1h-2zM864 243h2v1h-2zM866 244h2v1h-2zM868 245h4v1h-4zM872 244h2v1h-2zM874 244h4v1h-4zM878 243h2v1h-2zM880 243h2v1h-2zM882 242h2v1h-2zM884 241h2v1h-2zM886 240h2v1h-2zM888 239h3v1h-3zM891 238h1v1h-1zM892 238h4v1h-4zM896 239h2v1h-2zM898 239h2v1h-2zM900 240h3v1h-3zM903 241h1v1h-1zM904 241h2v1h-2zM906 242h3v1h-3zM909 243h1v1h-1zM910 243h2v1h-2zM912 244h3v1h-3zM915 245h1v1h-1zM916 245h2v1h-2zM918 246h2v1h-2zM920 247h2v1h-2zM922 248h4v1h-4zM926 249h2v1h-2zM928 249h2v1h-2zM930 250h2v1h-2zM932 251h2v1h-2zM934 252h6v1h-6zM940 252h6v1h-6zM946 252h6v1h-6zM952 252h6v1h-6zM958 252h2v1h-2zM960 253h3v1h-3zM963 254h1v1h-1zM964 254h1v1h-1zM965 255h2v1h-2zM967 256h1v1h-1zM968 257h2v1h-2zM970 258h1v1h-1z" fill="#e6e600"/><path d="M94 221h4v1h-4zM98 220h2v1h-2zM100 220h1v1h-1zM101 219h1v1h-1zM102 218h1v1h-1zM103 217h1v1h-1zM104 216h1v1h-1zM105 215h1v1h-1zM106 214h1v1h-1zM107 213h1v1h-1zM108 212h1v1h-1zM109 211h1v1h-1zM110 210h1v1h-1zM111 209h1v1h-1zM112 208h1v1h-1zM113 209h2v1h-2zM115 210h1v1h-1zM116 211h2v1h-2zM118 212h2v1h-2zM120 213h2v1h-2zM122 214h2v1h-2zM124 215h2v1h-2zM126 216h2v1h-2zM128 217h2v1h-2zM130 218h2v1h-2zM132 219h2v1h-2zM134 220h2v1h-2zM136 221h1v1h-1zM137 222h2v1h-2zM139 223h1v1h-1zM140 224h2v1h-2zM142 225h4v1h-4zM146 226h2v1h-2zM148 226h6v1h-6zM154 226h6v1h-6zM160 226h6v1h-6zM166 226h4v1h-4zM170 225h2v1h-2zM172 225h4v1h-4zM176 224h2v1h-2zM178 224h2v1h-2zM180 223h3v1h-3zM183 222h1v1h-1zM184 222h6v1h-6zM190 222h4v1h-4zM194 223h2v1h-2zM196 223h2v1h-2zM198 224h3v1h-3zM201 225h1v1h-1zM202 225h4v1h-4zM206 226h2v1h-2zM208 226h2v1h-2zM210 225h3v1h-3zM213 224h1v1h-1zM214 224h2v1h-2zM216 223h3v1h-3zM219 222h1v1h-1zM220 222h1v1h-1zM221 221h2v1h-2zM223 220h1v1h-1zM224 219h2v1h-2zM226 218h2v1h-2zM228 219h3v1h-3zM231 220h1v1h-1zM232 220h6v1h-6zM238 220h6v1h-6zM244 220h4v1h-4zM248 219h2v1h-2zM250 219h4v1h-4zM254 218h2v1h-2zM256 218h2v1h-2zM258 217h3v1h-3zM261 216h1v1h-1zM262 216h4v1h-4zM266 217h2v1h-2zM268 217h6v1h-6zM274 217h4v1h-4zM278 216h2v1h-2zM280 216h6v1h-6zM286 216h4v1h-4zM290 215h2v1h-2zM292 215h6v1h-6zM298 215h4v1h-4zM302 214h2v1h-2zM304 214h6v1h-6zM310 214h4v1h-4zM314 213h2v1h-2zM316 213h4v1h-4zM320 212h2v1h-2zM322 212h6v1h-6zM328 212h1v1h-1zM329 213h2v1h-2zM331 214h1v1h-1zM332 215h2v1h-2zM334 216h1v1h-1zM335 217h2v1h-2zM337 218h1v1h-1zM338 219h2v1h-2zM340 220h2v1h-2zM342 219h3v1h-3zM345 218h1v1h-1zM346 218h2v1h-2zM348 217h3v1h-3zM351 216h1v1h-1zM352 216h2v1h-2zM354 215h2v1h-2zM356 214h2v1h-2zM358 213h1v1h-1zM359 212h2v1h-2zM361 211h1v1h-1zM362 210h2v1h-2zM364 209h1v1h-1zM365 210h2v1h-2zM367 211h1v1h-1zM368 212h2v1h-2zM370 213v1h1v-1zM371 214v2h1v-2zM372 216v1h1v-1zM373 217v1h1v-1zM374 218v2h1v-2zM375 220v1h1v-1zM376 221h2v1h-2zM378 222h3v1h-3zM381 223h1v1h-1zM382 223h2v1h-2zM384 224h2v1h-2zM386 225h2v1h-2zM388 226h2v1h-2zM390 225h3v1h-3zM393 224h1v1h-1zM394 224h1v1h-1zM395 223h1v1h-1zM396 222h2v1h-2zM398 221h1v1h-1zM399 220h1v1h-1zM400 219v1h1v-1zM401 218v1h1v-1zM402 217v1h1v-1zM403 215v2h1v-2zM404 214v1h1v-1zM405 213v1h1v-1zM406 212v1h1v-1zM407 210v2h1v-2zM408 209v1h1v-1zM409 207v2h1v-2zM410 206v1h1v-1zM411 204v2h1v-2zM412 203v1h1v-1zM413 201v2h1v-2zM414 200v1h1v-1zM415 198v2h1v-2zM416 197v1h1v-1zM417 195v2h1v-2zM418 194v1h1v-1zM419 192v2h1v-2zM420 191v1h1v-1zM421 190v1h1v-1zM422 188v2h1v-2zM423 187v1h1v-1zM424 186v1h1v-1zM425 184v2h1v-2zM426 183v1h1v-1zM427 181v2h1v-2zM428 180v1h1v-1zM429 178v2h1v-2zM430 177v1h1v-1zM431 176v1h1v-1zM432 175v1h1v-1zM433 173v2h1v-2zM434 172v1h1v-1zM435 171v1h1v-1zM436 170h1v1h-1zM437 169h1v1h-1zM438 168h1v1h-1zM439 167h1v1h-1zM440 166h1v1h-1zM441 165h1v1h-1zM442 164h2v1h-2zM444 163h2v1h-2zM446 162h2v1h-2zM448 161h6v1h-6zM454 161h4v1h-4zM458 162h2v1h-2zM460 162h2v1h-2zM462 163h3v1h-3zM465 164h1v1h-1zM466 164h2v1h-2zM468 165h2v1h-2zM470 166h2v1h-2zM472 167h1v1h-1zM473 168h1v1h-1zM474 169h2v1h-2zM476 170h1v1h-1zM477 171h1v1h-1zM478 172v1h1v-1zM479 173v1h1v-1zM480 174v1h1v-1zM481 175v2h1v-2zM482 177v1h1v-1zM483 178v1h1v-1zM484 179v1h1v-1zM485 180v1h1v-1zM486 181v1h1v-1zM487 182v2h1v-2zM488 184v1h1v-1zM489 185v1h1v-1zM490 186h6v1h-6zM496 186h4v1h-4zM500 187h2v1h-2zM502 187h4v1h-4zM506 186h2v1h-2zM508 186h2v1h-2zM510 185h3v1h-3zM513 184h1v1h-1zM514 184h4v1h-4zM518 185h2v1h-2zM520 185h4v1h-4zM524 184h2v1h-2zM526 184h2v1h-2zM528 183h3v1h-3zM531 182h1v1h-1zM532 182h2v1h-2zM534 181h3v1h-3zM537 180h1v1h-1zM538 180h4v1h-4zM542 179h2v1h-2zM544 179h4v1h-4zM548 180h2v1h-2zM550 180h2v1h-2zM552 181h3v1h-3zM555 182h1v1h-1zM556 182h1v1h-1zM557 183h1v1h-1zM558 184h2v1h-2zM560 185h1v1h-1zM561 186h1v1h-1zM562 187h1v1h-1zM563 188h1v1h-1zM564 189h2v1h-2zM566 190h1v1h-1zM567 191h1v1h-1zM568 192h2v1h-2zM570 193h2v1h-2zM572 194h2v1h-2zM574 195h6v1h-6zM580 195h1v1h-1zM581 196h2v1h-2zM583 197h1v1h-1zM584 198h2v1h-2zM586 199h1v1h-1zM587 200h1v1h-1zM588 201h2v1h-2zM590 202h1v1h-1zM591 203h1v1h-1zM592 204v2h1v-2zM593 206v2h1v-2zM594 208v2h1v-2zM595 210v2h1v-2zM596 212v2h1v-2zM597 214v2h1v-2zM598 216v1h1v-1zM598 217v1h1v-1zM599 218v2h1v-2zM600 220v1h1v-1zM601 221v1h1v-1zM602 222v2h1v-2zM603 224v1h1v-1zM604 225h1v1h-1zM605 226h1v1h-1zM606 227h1v1h-1zM607 228h1v1h-1zM608 229h1v1h-1zM609 230h1v1h-1zM610 231v1h1v-1zM611 232v1h1v-1zM612 233v1h1v-1zM613 234v2h1v-2zM614 236v1h1v-1zM615 237v1h1v-1zM616 238h2v1h-2zM618 239h3v1h-3zM621 240h1v1h-1zM622 240h2v1h-2zM624 241h3v1h-3zM627 242h1v1h-1zM628 242h2v1h-2zM630 243h2v1h-2zM632 244h2v1h-2zM634 245h2v1h-2zM636 246h2v1h-2zM638 247h2v1h-2zM640 248h2v1h-2zM642 249h3v1h-3zM645 250h1v1h-1zM646 250h6v1h-6zM652 250h2v1h-2zM654 249h3v1h-3zM657 248h1v1h-1zM658 248h1v1h-1zM659 247h2v1h-2zM661 246h1v1h-1zM662 245h2v1h-2zM664 244h2v1h-2zM666 243h3v1h-3zM669 242h1v1h-1zM670 242h2v1h-2zM672 241h3v1h-3zM675 240h1v1h-1zM676 240h6v1h-6zM682 240h6v1h-6zM688 240h6v1h-6zM694 240h4v1h-4zM698 239h2v1h-2zM700 239h1v1h-1zM701 240h1v1h-1zM702 241h2v1h-2zM704 242h1v1h-1zM705 243h1v1h-1zM706 244h2v1h-2zM708 245h3v1h-3zM711 246h1v1h-1zM712 246h4v1h-4zM716 245h2v1h-2zM718 245h4v1h-4zM722 244h2v1h-2zM724 244v2h1v-2zM725 246v2h1v-2zM726 248v2h1v-2zM727 250v2h1v-2zM728 252v2h1v-2zM729 254v2h1v-2zM730 256v1h1v-1zM730 257v2h1v-2zM731 259v2h1v-2zM732 261v3h1v-3zM733 264v2h1v-2zM734 266v3h1v-3zM735 269v2h1v-2zM736 271v1h1v-1zM736 272v3h1v-3zM737 275v4h1v-4zM738 279v4h1v-4zM739 283v4h1v-4zM740 287v4h1v-4zM741 291v4h1v-4zM742 295v1h1v-1zM742 296v2h1v-2zM743 298v2h1v-2zM744 300v2h1v-2zM745 302v2h1v-2zM746 304v2h1v-2zM747 306v2h1v-2zM748 308v2h1v-2zM749 310v2h1v-2zM750 312v2h1v-2zM751 314v2h1v-2zM752 316v2h1v-2zM753 318v2h1v-2zM754 320v1h1v-1zM755 321v2h1v-2zM756 323v1h1v-1zM757 324v1h1v-1zM758 325v2h1v-2zM759 327v1h1v-1zM760 328v1h1v-1zM761 329v1h1v-1zM762 330v1h1v-1zM763 331v2h1v-2zM764 333v1h1v-1zM765 334v1h1v-1zM766 335h1v1h-1zM767 336h1v1h-1zM768 337h1v1h-1zM769 338h1v1h-1zM770 339h1v1h-1zM771 340h1v1h-1zM772 341h1v1h-1zM773 342h1v1h-1zM774 343h1v1h-1zM775 344h1v1h-1zM776 345h1v1h-1zM777 346h1v1h-1zM778 347h2v1h-2zM780 348h3v1h-3zM783 349h1v1h-1zM784 349h1v1h-1zM785 350h2v1h-2zM787 351h1v1h-1zM788 352h2v1h-2zM790 353h4v1h-4zM794 354h2v1h-2zM796 354h2v1h-2zM798 355h3v1h-3zM801 356h1v1h-1zM802 356h6v1h-6zM808 356h4v1h-4zM812 355h2v1h-2zM814 355h6v1h-6zM820 355h1v1h-1zM821 354h2v1h-2zM823 353h1v1h-1zM824 352h2v1h-2zM826 351h1v1h-1zM827 350h2v1h-2zM829 349h1v1h-1zM830 348h2v1h-2zM832 347v1h1v-1zM833 345v2h1v-2zM834 343v2h1v-2zM835 341v2h1v-2zM836 339v2h1v-2zM837 337v2h1v-2zM838 336h6v1h-6zM844 336v1h1v-1zM845 337v2h1v-2zM846 339v1h1v-1zM847 340v1h1v-1zM848 341v2h1v-2zM849 343v1h1v-1zM850 344h2v1h-2zM852 345h2v1h-2zM854 346h2v1h-2zM856 347h6v1h-6zM862 347h4v1h-4zM866 348h2v1h-2zM868 348h4v1h-4zM872 347h2v1h-2zM874 347h6v1h-6zM880 347h6v1h-6zM886 347h6v1h-6zM892 347h4v1h-4zM896 348h2v1h-2zM898 348h4v1h-4zM902 347h2v1h-2zM904 347h6v1h-6zM910 347h4v1h-4zM914 346h2v1h-2zM916 346h6v1h-6zM922 346h4v1h-4zM926 345h2v1h-2zM928 345h6v1h-6zM934 345h6v1h-6zM940 345h6v1h-6zM946 345h1v1h-1zM947 344h1v1h-1zM948 343h1v1h-1zM949 342h1v1h-1zM950 341h1v1h-1zM951 340h1v1h-1zM952 339h2v1h-2zM954 338h2v1h-2zM956 337h2v1h-2zM958 336h1v1h-1zM959 335h2v1h-2zM961 334h1v1h-1zM962 333h2v1h-2zM964 332v1h1v-1zM965 330v2h1v-2zM966 328v2h1v-2zM967 327v1h1v-1zM968 325v2h1v-2zM969 323v2h1v-2zM970 322v1h1v-1z" fill="#e628e6"/>
<rect x="94" y="463" width="1" height="8" fill="#f03250"/>
<rect x="100" y="459" width="1" height="12" fill="#f03250"/>
<rect x="106" y="456" width="1" height="15" fill="#f03250"/>
<rect x="112" y="460" width="1" height="11" fill="#f03250"/>
<rect x="118" y="470" width="1" height="2" fill="#3cd28c"/>
<rect x="124" y="470" width="1" height="9" fill="#3cd28c"/>
<rect x="130" y="470" width="1" height="12" fill="#3cd28c"/>
<rect x="136" y="470" width="1" height="12" fill="#3cd28c"/>
<rect x="142" y="470" width="1" height="16" fill="#3cd28c"/>
<rect x="148" y="470" width="1" height="11" fill="#3cd28c"/>
<rect x="154" y="470" width="1" height="7" fill="#3cd28c"/>
<rect x="160" y="470" width="1" height="4" fill="#3cd28c"/>
<rect x="166" y="467" width="1" height="4" fill="#f03250"/>
<rect x="172" y="460" width="1" height="11" fill="#f03250"/>
<rect x="178" y="463" width="1" height="8" fill="#f03250"/>
<rect x="184" y="464" width="1" height="7" fill="#f03250"/>
<rect x="190" y="466" width="1" height="5" fill="#f03250"/>
<rect x="196" y="468" width="1" height="3" fill="#f03250"/>
<rect x="202" y="470" width="1" height="2" fill="#3cd28c"/>
<rect x="208" y="470" width="1" height="3" fill="#3cd28c"/>
<rect x="214" y="466" width="1" height="5" fill="#f03250"/>
<rect x="220" y="468" width="1" height="3" fill="#f03250"/>
<rect x="226" y="469" width="1" height="2" fill="#f03250"/>
<rect x="232" y="470" width="1" height="5" fill="#3cd28c"/>
<rect x="238" y="470" width="1" height="4" fill="#3cd28c"/>
<rect x="244" y="470" width="1" height="2" fill="#3cd28c"/>
<rect x="250" y="464" width="1" height="7" fill="#f03250"/>
<rect x="256" y="461" width="1" height="10" fill="#f03250"/>
<rect x="262" y="455" width="1" height="16" fill="#f03250"/>
<rect x="268" y="454" width="1" height="17" fill="#f03250"/>
<rect x="274" y="456" width="1" height="15" fill="#f03250"/>
<rect x="280" y="459" width="1" height="12" fill="#f03250"/>
<rect x="286" y="464" width="1" height="7" fill="#f03250"/>
<rect x="292" y="464" width="1" height="7" fill="#f03250"/>
<rect x="298" y="465" width="1" height="6" fill="#f03250"/>
<rect x="304" y="464" width="1" height="7" fill="#f03250"/>
<rect x="310" y="465" width="1" height="6" fill="#f03250"/>
<rect x="316" y="464" width="1" height="7" fill="#f03250"/>
<rect x="322" y="462" width="1" height="9" fill="#f03250"/>
<rect x="328" y="457" width="1" height="14" fill="#f03250"/>
<rect x="334" y="452" width="1" height="19" fill="#f03250"/>
<rect x="340" y="447" width="1" height="24" fill="#f03250"/>
<rect x="346" y="447" width="1" height="24" fill="#f03250"/>
<rect x="352" y="444" width="1" height="27" fill="#f03250"/>
<rect x="358" y="448" width="1" height="23" fill="#f03250"/>
<rect x="364" y="450" width="1" height="21" fill="#f03250"/>
<rect x="370" y="443" width="1" height="28" fill="#f03250"/>
<rect x="376" y="435" width="1" height="36" fill="#f03250"/>
<rect x="382" y="439" width="1" height="32" fill="#f03250"/>
<rect x="388" y="435" width="1" height="36" fill="#f03250"/>
<rect x="394" y="439" width="1" height="32" fill="#f03250"/>
<rect x="400" y="446" width="1" height="25" fill="#f03250"/>
<rect x="406" y="455" width="1" height="16" fill="#f03250"/>
<rect x="412" y="464" width="1" height="7" fill="#f03250"/>
<rect x="418" y="470" width="1" height="5" fill="#3cd28c"/>
<rect x="424" y="470" width="1" height="14" fill="#3cd28c"/>
<rect x="430" y="470" width="1" height="19" fill="#3cd28c"/>
<rect x="436" y="470" width="1" height="28" fill="#3cd28c"/>
<rect x="442" y="470" width="1" height="28" fill="#3cd28c"/>
<rect x="448" y="470" width="1" height="32" fill="#3cd28c"/>
<rect x="454" y="470" width="1" height="32" fill="#3cd28c"/>
<rect x="460" y="470" width="1" height="29" fill="#3cd28c"/>
<rect x="466" y="470" width="1" height="31" fill="#3cd28c"/>
<rect x="472" y="470" width="1" height="30" fill="#3cd28c"/>
<rect x="478" y="470" width="1" height="33" fill="#3cd28c"/>
<rect x="484" y="470" width="1" height="35" fill="#3cd28c"/>
<rect x="490" y="470" width="1" height="34" fill="#3cd28c"/>
<rect x="496" y="470" width="1" height="26" fill="#3cd28c"/>
<rect x="502" y="470" width="1" height="18" fill="#3cd28c"/>
<rect x="508" y="470" width="1" height="19" fill="#3cd28c"/>
<rect x="514" y="470" width="1" height="17" fill="#3cd28c"/>
<rect x="520" y="470" width="1" height="18" fill="#3cd28c"/>
<rect x="526" y="470" width="1" height="15" fill="#3cd28c"/>
<rect x="532" y="470" width="1" height="11" fill="#3cd28c"/>
<rect x="538" y="470" width="1" height="6" fill="#3cd28c"/>
<rect x="544" y="470" width="1" height="2" fill="#3cd28c"/>
<rect x="550" y="470" width="1" height="6" fill="#3cd28c"/>
<rect x="556" y="470" width="1" height="6" fill="#3cd28c"/>
<rect x="562" y="470" width="1" height="12" fill="#3cd28c"/>
<rect x="568" y="470" width="1" height="15" fill="#3cd28c"/>
<rect x="574" y="470" width="1" height="12" fill="#3cd28c"/>
<rect x="580" y="470" width="1" height="10" fill="#3cd28c"/>
<rect x="586" y="470" width="1" height="14" fill="#3cd28c"/>
<rect x="592" y="470" width="1" height="15" fill="#3cd28c"/>
<rect x="598" y="470" width="1" height="20" fill="#3cd28c"/>
<rect x="604" y="470" width="1" height="23" fill="#3cd28c"/>
<rect x="610" y="470" width="1" height="21" fill="#3cd28c"/>
<rect x="616" y="470" width="1" height="21" fill="#3cd28c"/>
<rect x="622" y="470" width="1" height="17" fill="#3cd28c"/>
<rect x="628" y="470" width="1" height="10" fill="#3cd28c"/>
<rect x="634" y="470" width="1" height="8" fill="#3cd28c"/>
<rect x="640" y="470" width="1" height="4" fill="#3cd28c"/>
<rect x="646" y="469" width="1" height="2" fill="#f03250"/>
<rect x="652" y="468" width="1" height="3" fill="#f03250"/>
<rect x="658" y="465" width="1" height="6" fill="#f03250"/>
<rect x="664" y="460" width="1" height="11" fill="#f03250"/>
<rect x="670" y="456" width="1" height="15" fill="#f03250"/>
<rect x="676" y="451" width="1" height="20" fill="#f03250"/>
<rect x="682" y="448" width="1" height="23" fill="#f03250"/>
<rect x="688" y="445" width="1" height="26" fill="#f03250"/>
<rect x="694" y="444" width="1" height="27" fill="#f03250"/>
<rect x="700" y="447" width="1" height="24" fill="#f03250"/>
<rect x="706" y="442" width="1" height="29" fill="#f03250"/>
<rect x="712" y="442" width="1" height="29" fill="#f03250"/>
<rect x="718" y="444" width="1" height="27" fill="#f03250"/>
<rect x="724" y="459" width="1" height="12" fill="#f03250"/>
<rect x="730" y="470" width="1" height="15" fill="#3cd28c"/>
<rect x="736" y="470" width="1" height="34" fill="#3cd28c"/>
<rect x="742" y="470" width="1" height="52" fill="#3cd28c"/>
<rect x="748" y="470" width="1" height="46" fill="#3cd28c"/>
<rect x="754" y="470" width="1" height="49" fill="#3cd28c"/>
<rect x="760" y="470" width="1" height="42" fill="#3cd28c"/>
<rect x="766" y="470" width="1" height="36" fill="#3cd28c"/>
<rect x="772" y="470" width="1" height="29" fill="#3cd28c"/>
<rect x="778" y="470" width="1" height="21" fill="#3cd28c"/>
<rect x="784" y="470" width="1" height="9" fill="#3cd28c"/>
<rect x="790" y="470" width="1" height="3" fill="#3cd28c"/>
<rect x="796" y="464" width="1" height="7" fill="#f03250"/>
<rect x="802" y="463" width="1" height="8" fill="#f03250"/>
<rect x="808" y="461" width="1" height="10" fill="#f03250"/>
<rect x="814" y="458" width="1" height="13" fill="#f03250"/>
<rect x="820" y="460" width="1" height="11" fill="#f03250"/>
<rect x="826" y="466" width="1" height="5" fill="#f03250"/>
<rect x="832" y="470" width="1" height="8" fill="#3cd28c"/>
<rect x="838" y="470" width="1" height="10" fill="#3cd28c"/>
<rect x="844" y="470" width="1" height="13" fill="#3cd28c"/>
<rect x="850" y="470" width="1" height="17" fill="#3cd28c"/>
<rect x="856" y="470" width="1" height="12" fill="#3cd28c"/>
<rect x="862" y="470" width="1" height="11" fill="#3cd28c"/>
<rect x="868" y="469" width="1" height="2" fill="#f03250"/>
<rect x="874" y="460" width="1" height="11" fill="#f03250"/>
<rect x="880" y="450" width="1" height="21" fill="#f03250"/>
<rect x="886" y="440" width="1" height="31" fill="#f03250"/>
<rect x="892" y="437" width="1" height="34" fill="#f03250"/>
<rect x="898" y="440" width="1" height="31" fill="#f03250"/>
<rect x="904" y="442" width="1" height="29" fill="#f03250"/>
<rect x="910" y="444" width="1" height="27" fill="#f03250"/>
<rect x="916" y="445" width="1" height="26" fill="#f03250"/>
<rect x="922" y="450" width="1" height="21" fill="#f03250"/>
<rect x="928" y="456" width="1" height="15" fill="#f03250"/>
<rect x="934" y="456" width="1" height="15" fill="#f03250"/>
<rect x="940" y="458" width="1" height="13" fill="#f03250"/>
<rect x="946" y="461" width="1" height="10" fill="#f03250"/>
<rect x="952" y="461" width="1" height="10" fill="#f03250"/>
<rect x="958" y="464" width="1" height="7" fill="#f03250"/>
<rect x="964" y="465" width="1" height="6" fill="#f03250"/>
<rect x="970" y="463" width="1" height="8" fill="#f03250"/>
<path d="M94 479h2v1h-2zM96 478h2v1h-2zM98 477h2v1h-2zM100 476h2v1h-2zM102 475h2v1h-2zM104 474h2v1h-2zM106 473h6v1h-6zM112 473h1v1h-1zM113 474h1v1h-1zM114 475h1v1h-1zM115 476h1v1h-1zM116 477h1v1h-1zM117 478h1v1h-1zM118 479h1v1h-1zM119 480h2v1h-2zM121 481h1v1h-1zM122 482h2v1h-2zM124 483h2v1h-2zM126 484h3v1h-3zM129 485h1v1h-1zM130 485h4v1h-4zM134 486h2v1h-2zM136 486h1v1h-1zM137 487h1v1h-1zM138 488h1v1h-1zM139 489h1v1h-1zM140 490h1v1h-1zM141 491h1v1h-1zM142 492h2v1h-2zM144 491h3v1h-3zM147 490h1v1h-1zM148 490h4v1h-4zM152 489h2v1h-2zM154 489h2v1h-2zM156 488h3v1h-3zM159 487h1v1h-1zM160 487h2v1h-2zM162 486h2v1h-2zM164 485h2v1h-2zM166 484h1v1h-1zM167 483h1v1h-1zM168 482h2v1h-2zM170 481h1v1h-1zM171 480h1v1h-1zM172 479h4v1h-4zM176 480h2v1h-2zM178 480h6v1h-6zM184 480h4v1h-4zM188 481h2v1h-2zM190 481h6v1h-6zM196 481h4v1h-4zM200 482h2v1h-2zM202 482h4v1h-4zM206 483h2v1h-2zM208 483h2v1h-2zM210 482h2v1h-2zM212 481h2v1h-2zM214 480h6v1h-6zM220 480h4v1h-4zM224 481h2v1h-2zM226 481h2v1h-2zM228 482h2v1h-2zM230 483h2v1h-2zM232 484h6v1h-6zM238 484h4v1h-4zM242 483h2v1h-2zM244 483h1v1h-1zM245 482h1v1h-1zM246 481h2v1h-2zM248 480h1v1h-1zM249 479h1v1h-1zM250 478h2v1h-2zM252 477h3v1h-3zM255 476h1v1h-1zM256 476h1v1h-1zM257 475h1v1h-1zM258 474h1v1h-1zM259 473h1v1h-1zM260 472h1v1h-1zM261 471h1v1h-1zM262 470h2v1h-2zM264 469h3v1h-3zM267 468h1v1h-1zM268 468h6v1h-6zM274 468h6v1h-6zM280 468h2v1h-2zM282 469h3v1h-3zM285 470h1v1h-1zM286 470h6v1h-6zM292 470h6v1h-6zM298 470h4v1h-4zM302 469h2v1h-2zM304 469h4v1h-4zM308 468h2v1h-2zM310 468h4v1h-4zM314 467h2v1h-2zM316 467h1v1h-1zM317 466h2v1h-2zM319 465h1v1h-1zM320 464h2v1h-2zM322 463h1v1h-1zM323 462h2v1h-2zM325 461h1v1h-1zM326 460h2v1h-2zM328 459h1v1h-1zM329 458h1v1h-1zM330 457h2v1h-2zM332 456h1v1h-1zM333 455h1v1h-1zM334 454h1v1h-1zM335 453h1v1h-1zM336 452h2v1h-2zM338 451h1v1h-1zM339 450h1v1h-1zM340 449h2v1h-2zM342 448h2v1h-2zM344 447h2v1h-2zM346 446h2v1h-2zM348 445h2v1h-2zM350 444h2v1h-2zM352 443h4v1h-4zM356 442h2v1h-2zM358 442h2v1h-2zM360 441h3v1h-3zM363 440h1v1h-1zM364 440h1v1h-1zM365 439h1v1h-1zM366 438h1v1h-1zM367 437h1v1h-1zM368 436h1v1h-1zM369 435h1v1h-1zM370 434v1h1v-1zM371 433v1h1v-1zM372 432v1h1v-1zM373 430v2h1v-2zM374 429v1h1v-1zM375 428v1h1v-1zM376 427h1v1h-1zM377 426h2v1h-2zM379 425h1v1h-1zM380 424h2v1h-2zM382 423h1v1h-1zM383 422h1v1h-1zM384 421h1v1h-1zM385 420h1v1h-1zM386 419h1v1h-1zM387 418h1v1h-1zM388 417h4v1h-4zM392 416h2v1h-2zM394 416h6v1h-6zM400 416h1v1h-1zM401 417h2v1h-2zM403 418h1v1h-1zM404 419h2v1h-2zM406 420h1v1h-1zM407 421h2v1h-2zM409 422h1v1h-1zM410 423h2v1h-2zM412 424h1v1h-1zM413 425h1v1h-1zM414 426h2v1h-2zM416 427h1v1h-1zM417 428h1v1h-1zM418 429h1v1h-1zM419 430h1v1h-1zM420 431h1v1h-1zM421 432h1v1h-1zM422 433h1v1h-1zM423 434h1v1h-1zM424 435h1v1h-1zM425 436h1v1h-1zM426 437h2v1h-2zM428 438h1v1h-1zM429 439h1v1h-1zM430 440h1v1h-1zM431 441h1v1h-1zM432 442h1v1h-1zM433 443h1v1h-1zM434 444h1v1h-1zM435 445h1v1h-1zM436 446h1v1h-1zM437 447h2v1h-2zM439 448h1v1h-1zM440 449h2v1h-2zM442 450h1v1h-1zM443 451h1v1h-1zM444 452h2v1h-2zM446 453h1v1h-1zM447 454h1v1h-1zM448 455h1v1h-1zM449 456h2v1h-2zM451 457h1v1h-1zM452 458h2v1h-2zM454 459h2v1h-2zM456 460h3v1h-3zM459 461h1v1h-1zM460 461h1v1h-1zM461 462h2v1h-2zM463 463h1v1h-1zM464 464h2v1h-2zM466 465h1v1h-1zM467 466h2v1h-2zM469 467h1v1h-1zM470 468h2v1h-2zM472 469h1v1h-1zM473 470h1v1h-1zM474 471h2v1h-2zM476 472h1v1h-1zM477 473h1v1h-1zM478 474h1v1h-1zM479 475h1v1h-1zM480 476h1v1h-1zM481 477h1v1h-1zM482 478h1v1h-1zM483 479h1v1h-1zM484 480h2v1h-2zM486 481h2v1h-2zM488 482h2v1h-2zM490 483h2v1h-2zM492 482h3v1h-3zM495 481h1v1h-1zM496 481h4v1h-4zM500 480h2v1h-2zM502 480h2v1h-2zM504 481h2v1h-2zM506 482h2v1h-2zM508 483h4v1h-4zM512 484h2v1h-2zM514 484h2v1h-2zM516 485h3v1h-3zM519 486h1v1h-1zM520 486h4v1h-4zM524 487h2v1h-2zM526 487h2v1h-2zM528 486h3v1h-3zM531 485h1v1h-1zM532 485h4v1h-4zM536 484h2v1h-2zM538 484h2v1h-2zM540 483h3v1h-3zM543 482h1v1h-1zM544 482h2v1h-2zM546 483h3v1h-3zM549 484h1v1h-1zM550 484h4v1h-4zM554 485h2v1h-2zM556 485h1v1h-1zM557 486h2v1h-2zM559 487h1v1h-1zM560 488h2v1h-2zM562 489h1v1h-1zM563 490h2v1h-2zM565 491h1v1h-1zM566 492h2v1h-2zM568 493h6v1h-6zM574 493h6v1h-6zM580 493h2v1h-2zM582 494h2v1h-2zM584 495h2v1h-2zM586 496h2v1h-2zM588 497h3v1h-3zM591 498h1v1h-1zM592 498h1v1h-1zM593 499h2v1h-2zM595 500h1v1h-1zM596 501h2v1h-2zM598 502h1v1h-1zM599 503h2v1h-2zM601 504h1v1h-1zM602 505h2v1h-2zM604 506h2v1h-2zM606 507h3v1h-3zM609 508h1v1h-1zM610 508h2v1h-2zM612 509h2v1h-2zM614 510h2v1h-2zM616 511h6v1h-6zM622 511h2v1h-2zM624 510h3v1h-3zM627 509h1v1h-1zM628 509h2v1h-2zM630 508h3v1h-3zM633 507h1v1h-1zM634 507h4v1h-4zM638 506h2v1h-2zM640 506h2v1h-2zM642 505h3v1h-3zM645 504h1v1h-1zM646 504h4v1h-4zM650 503h2v1h-2zM652 503h2v1h-2zM654 502h3v1h-3zM657 501h1v1h-1zM658 501h1v1h-1zM659 500h2v1h-2zM661 499h1v1h-1zM662 498h2v1h-2zM664 497h1v1h-1zM665 496h2v1h-2zM667 495h1v1h-1zM668 494h2v1h-2zM670 493h1v1h-1zM671 492h2v1h-2zM673 491h1v1h-1zM674 490h2v1h-2zM676 489h1v1h-1zM677 488h2v1h-2zM679 487h1v1h-1zM680 486h2v1h-2zM682 485h1v1h-1zM683 484h1v1h-1zM684 483h2v1h-2zM686 482h1v1h-1zM687 481h1v1h-1zM688 480h2v1h-2zM690 479h2v1h-2zM692 478h2v1h-2zM694 477h4v1h-4zM698 476h2v1h-2zM700 476h1v1h-1zM701 475h1v1h-1zM702 474h1v1h-1zM703 473h1v1h-1zM704 472h1v1h-1zM705 471h1v1h-1zM706 470h1v1h-1zM707 469h2v1h-2zM709 468h1v1h-1zM710 467h2v1h-2zM712 466h2v1h-2zM714 465h2v1h-2zM716 464h2v1h-2zM718 463v1h1v-1zM719 464v1h1v-1zM720 465v1h1v-1zM721 466v2h1v-2zM722 468v1h1v-1zM723 469v1h1v-1zM724 470v2h1v-2zM725 472v2h1v-2zM726 474v2h1v-2zM727 476v2h1v-2zM728 478v2h1v-2zM729 480v2h1v-2zM730 482v1h1v-1zM730 483v2h1v-2zM731 485v2h1v-2zM732 487v3h1v-3zM733 490v2h1v-2zM734 492v3h1v-3zM735 495v2h1v-2zM736 497v1h1v-1zM736 498v2h1v-2zM737 500v2h1v-2zM738 502v2h1v-2zM739 504v3h1v-3zM740 507v2h1v-2zM741 509v2h1v-2zM742 511v1h1v-1zM742 512h1v1h-1zM743 513h2v1h-2zM745 514h1v1h-1zM746 515h2v1h-2zM748 516h1v1h-1zM749 517h1v1h-1zM750 518h1v1h-1zM751 519h1v1h-1zM752 520h1v1h-1zM753 521h1v1h-1zM754 522h2v1h-2zM756 523h3v1h-3zM759 524h1v1h-1zM760 524h6v1h-6zM766 524h6v1h-6zM772 524h6v1h-6zM778 524h1v1h-1zM779 523h1v1h-1zM780 522h2v1h-2zM782 521h1v1h-1zM783 520h1v1h-1zM784 519h1v1h-1zM785 518h2v1h-2zM787 517h1v1h-1zM788 516h2v1h-2zM790 515h2v1h-2zM792 514h2v1h-2zM794 513h2v1h-2zM796 512h4v1h-4zM800 511h2v1h-2zM802 511h2v1h-2zM804 510h2v1h-2zM806 509h2v1h-2zM808 508h2v1h-2zM810 507h2v1h-2zM812 506h2v1h-2zM814 505h6v1h-6zM820 505h2v1h-2zM822 506h3v1h-3zM825 507h1v1h-1zM826 507h1v1h-1zM827 508h1v1h-1zM828 509h2v1h-2zM830 510h1v1h-1zM831 511h1v1h-1zM832 512h2v1h-2zM834 513h2v1h-2zM836 514h2v1h-2zM838 515h2v1h-2zM840 516h2v1h-2zM842 517h2v1h-2zM844 518h1v1h-1zM845 519h2v1h-2zM847 520h1v1h-1zM848 521h2v1h-2zM850 522h6v1h-6zM856 522h6v1h-6zM862 522h1v1h-1zM863 521h2v1h-2zM865 520h1v1h-1zM866 519h2v1h-2zM868 518v1h1v-1zM869 517v1h1v-1zM870 516v1h1v-1zM871 514v2h1v-2zM872 513v1h1v-1zM873 512v1h1v-1zM874 511v1h1v-1zM875 509v2h1v-2zM876 508v1h1v-1zM877 507v1h1v-1zM878 505v2h1v-2zM879 504v1h1v-1zM880 503v1h1v-1zM881 501v2h1v-2zM882 500v1h1v-1zM883 499v1h1v-1zM884 497v2h1v-2zM885 496v1h1v-1zM886 495h1v1h-1zM887 494h1v1h-1zM888 493h1v1h-1zM889 492h1v1h-1zM890 491h1v1h-1zM891 490h1v1h-1zM892 489h2v1h-2zM894 488h3v1h-3zM897 487h1v1h-1zM898 487h2v1h-2zM900 486h2v1h-2zM902 485h2v1h-2zM904 484h2v1h-2zM906 483h2v1h-2zM908 482h2v1h-2zM910 481h2v1h-2zM912 480h3v1h-3zM915 479h1v1h-1zM916 479h6v1h-6zM922 479h4v1h-4zM926 480h2v1h-2zM928 480h4v1h-4zM932 479h2v1h-2zM934 479h4v1h-4zM938 478h2v1h-2zM940 478h4v1h-4zM944 477h2v1h-2zM946 477h6v1h-6zM952 477h6v1h-6zM958 477h4v1h-4zM962 478h2v1h-2zM964 478h2v1h-2zM966 477h3v1h-3zM969 476h2v1h-2z" fill="#ffffff"/>
<path d="M94 483h2v1h-2zM96 482h3v1h-3zM99 481h1v1h-1zM100 481h2v1h-2zM102 480h3v1h-3zM105 479h1v1h-1zM106 479h4v1h-4zM110 478h2v1h-2zM112 478h6v1h-6zM118 478h4v1h-4zM122 479h2v1h-2zM124 479h2v1h-2zM126 480h3v1h-3zM129 481h1v1h-1zM130 481h4v1h-4zM134 482h2v1h-2zM136 482h2v1h-2zM138 483h3v1h-3zM141 484h1v1h-1zM142 484h4v1h-4zM146 485h2v1h-2zM148 485h4v1h-4zM152 486h2v1h-2zM154 486h6v1h-6zM160 486h4v1h-4zM164 485h2v1h-2zM166 485h4v1h-4zM170 484h2v1h-2zM172 484h6v1h-6zM178 484h4v1h-4zM182 483h2v1h-2zM184 483h4v1h-4zM188 482h2v1h-2zM190 482h6v1h-6zM196 482h6v1h-6zM202 482h6v1h-6zM208 482h6v1h-6zM214 482h4v1h-4zM218 481h2v1h-2zM220 481h4v1h-4zM224 482h2v1h-2zM226 482h6v1h-6zM232 482h6v1h-6zM238 482h6v1h-6zM244 482h4v1h-4zM248 481h2v1h-2zM250 481h4v1h-4zM254 480h2v1h-2zM256 480h2v1h-2zM258 479h3v1h-3zM261 478h1v1h-1zM262 478h2v1h-2zM264 477h3v1h-3zM267 476h1v1h-1zM268 476h4v1h-4zM272 475h2v1h-2zM274 475h2v1h-2zM276 474h3v1h-3zM279 473h1v1h-1zM280 473h4v1h-4zM284 472h2v1h-2zM286 472h6v1h-6zM292 472h4v1h-4zM296 471h2v1h-2zM298 471h6v1h-6zM304 471h4v1h-4zM308 470h2v1h-2zM310 470h6v1h-6zM316 470h2v1h-2zM318 469h3v1h-3zM321 468h1v1h-1zM322 468h2v1h-2zM324 467h3v1h-3zM327 466h1v1h-1zM328 466h2v1h-2zM330 465h3v1h-3zM333 464h1v1h-1zM334 464h1v1h-1zM335 463h2v1h-2zM337 462h1v1h-1zM338 461h2v1h-2zM340 460h2v1h-2zM342 459h2v1h-2zM344 458h2v1h-2zM346 457h2v1h-2zM348 456h3v1h-3zM351 455h1v1h-1zM352 455h2v1h-2zM354 454h2v1h-2zM356 453h2v1h-2zM358 452h2v1h-2zM360 451h3v1h-3zM363 450h1v1h-1zM364 450h2v1h-2zM366 449h2v1h-2zM368 448h2v1h-2zM370 447h1v1h-1zM371 446h2v1h-2zM373 445h1v1h-1zM374 444h2v1h-2zM376 443h1v1h-1zM377 442h2v1h-2zM379 441h1v1h-1zM380 440h2v1h-2zM382 439h1v1h-1zM383 438h2v1h-2zM385 437h1v1h-1zM386 436h2v1h-2zM388 435h1v1h-1zM389 434h2v1h-2zM391 433h1v1h-1zM392 432h2v1h-2zM394 431h2v1h-2zM396 430h2v1h-2zM398 429h2v1h-2zM400 428h2v1h-2zM402 427h3v1h-3zM405 426h1v1h-1zM406 426h4v1h-4zM410 425h2v1h-2zM412 425h4v1h-4zM416 426h2v1h-2zM418 426h4v1h-4zM422 427h2v1h-2zM424 427h2v1h-2zM426 428h2v1h-2zM428 429h2v1h-2zM430 430h2v1h-2zM432 431h2v1h-2zM434 432h2v1h-2zM436 433h2v1h-2zM438 434h2v1h-2zM440 435h2v1h-2zM442 436h1v1h-1zM443 437h1v1h-1zM444 438h2v1h-2zM446 439h1v1h-1zM447 440h1v1h-1zM448 441h2v1h-2zM450 442h2v1h-2zM452 443h2v1h-2zM454 444h2v1h-2zM456 445h2v1h-2zM458 446h2v1h-2zM460 447h1v1h-1zM461 448h1v1h-1zM462 449h2v1h-2zM464 450h1v1h-1zM465 451h1v1h-1zM466 452h2v1h-2zM468 453h2v1h-2zM470 454h2v1h-2zM472 455h1v1h-1zM473 456h2v1h-2zM475 457h1v1h-1zM476 458h2v1h-2zM478 459h1v1h-1zM479 460h2v1h-2zM481 461h1v1h-1zM482 462h2v1h-2zM484 463h1v1h-1zM485 464h2v1h-2zM487 465h1v1h-1zM488 466h2v1h-2zM490 467h2v1h-2zM492 468h2v1h-2zM494 469h2v1h-2zM496 470h4v1h-4zM500 471h2v1h-2zM502 471h2v1h-2zM504 472h2v1h-2zM506 473h2v1h-2zM508 474h2v1h-2zM510 475h3v1h-3zM513 476h1v1h-1zM514 476h2v1h-2zM516 477h3v1h-3zM519 478h1v1h-1zM520 478h2v1h-2zM522 479h3v1h-3zM525 480h1v1h-1zM526 480h4v1h-4zM530 481h2v1h-2zM532 481h4v1h-4zM536 482h2v1h-2zM538 482h6v1h-6zM544 482h6v1h-6zM550 482h4v1h-4zM554 483h2v1h-2zM556 483h4v1h-4zM560 484h2v1h-2zM562 484h2v1h-2zM564 485h3v1h-3zM567 486h1v1h-1zM568 486h4v1h-4zM572 487h2v1h-2zM574 487h2v1h-2zM576 488h3v1h-3zM579 489h1v1h-1zM580 489h4v1h-4zM584 490h2v1h-2zM586 490h2v1h-2zM588 491h3v1h-3zM591 492h1v1h-1zM592 492h2v1h-2zM594 493h3v1h-3zM597 494h1v1h-1zM598 494h2v1h-2zM600 495h2v1h-2zM602 496h2v1h-2zM604 497h4v1h-4zM608 498h2v1h-2zM610 498h2v1h-2zM612 499h2v1h-2zM614 500h2v1h-2zM616 501h2v1h-2zM618 502h3v1h-3zM621 503h1v1h-1zM622 503h4v1h-4zM626 504h2v1h-2zM628 504h4v1h-4zM632 505h2v1h-2zM634 505h6v1h-6zM640 505h6v1h-6zM646 505h6v1h-6zM652 505h4v1h-4zM656 504h2v1h-2zM658 504h2v1h-2zM660 503h3v1h-3zM663 502h1v1h-1zM664 502h4v1h-4zM668 501h2v1h-2zM670 501h2v1h-2zM672 500h2v1h-2zM674 499h2v1h-2zM676 498h2v1h-2zM678 497h2v1h-2zM680 496h2v1h-2zM682 495h2v1h-2zM684 494h2v1h-2zM686 493h2v1h-2zM688 492h2v1h-2zM690 491h2v1h-2zM692 490h2v1h-2zM694 489h2v1h-2zM696 488h2v1h-2zM698 487h2v1h-2zM700 486h2v1h-2zM702 485h2v1h-2zM704 484h2v1h-2zM706 483h1v1h-1zM707 482h2v1h-2zM709 481h1v1h-1zM710 480h2v1h-2zM712 479h2v1h-2zM714 478h2v1h-2zM716 477h2v1h-2zM718 476h4v1h-4zM722 475h2v1h-2zM724 475h2v1h-2zM726 476h3v1h-3zM729 477h1v1h-1zM730 477h1v1h-1zM731 478h2v1h-2zM733 479h1v1h-1zM734 480h2v1h-2zM736 481h1v1h-1zM737 482h1v1h-1zM738 483h1v1h-1zM739 484h1v1h-1zM740 485h1v1h-1zM741 486h1v1h-1zM742 487h1v1h-1zM743 488h1v1h-1zM744 489h1v1h-1zM745 490h1v1h-1zM746 491h1v1h-1zM747 492h1v1h-1zM748 493h1v1h-1zM749 494h1v1h-1zM750 495h1v1h-1zM751 496h1v1h-1zM752 497h1v1h-1zM753 498h1v1h-1zM754 499h1v1h-1zM755 500h1v1h-1zM756 501h2v1h-2zM758 502h1v1h-1zM759 503h1v1h-1zM760 504h1v1h-1zM761 505h2v1h-2zM763 506h1v1h-1zM764 507h2v1h-2zM766 508h1v1h-1zM767 509h2v1h-2zM769 510h1v1h-1zM770 511h2v1h-2zM772 512h2v1h-2zM774 513h3v1h-3zM777 514h1v1h-1zM778 514h4v1h-4zM782 515h2v1h-2zM784 515h6v1h-6zM790 515h4v1h-4zM794 514h2v1h-2zM796 514h4v1h-4zM800 513h2v1h-2zM802 513h4v1h-4zM806 512h2v1h-2zM808 512h4v1h-4zM812 511h2v1h-2zM814 511h4v1h-4zM818 510h2v1h-2zM820 510h4v1h-4zM824 509h2v1h-2zM826 509h4v1h-4zM830 510h2v1h-2zM832 510h4v1h-4zM836 511h2v1h-2zM838 511h2v1h-2zM840 512h3v1h-3zM843 513h1v1h-1zM844 513h2v1h-2zM846 514h3v1h-3zM849 515h1v1h-1zM850 515h4v1h-4zM854 516h2v1h-2zM856 516h4v1h-4zM860 517h2v1h-2zM862 517h6v1h-6zM868 517h4v1h-4zM872 516h2v1h-2zM874 516h1v1h-1zM875 515h2v1h-2zM877 514h1v1h-1zM878 513h2v1h-2zM880 512h2v1h-2zM882 511h3v1h-3zM885 510h1v1h-1zM886 510h1v1h-1zM887 509h1v1h-1zM888 508h2v1h-2zM890 507h1v1h-1zM891 506h1v1h-1zM892 505h1v1h-1zM893 504h2v1h-2zM895 503h1v1h-1zM896 502h2v1h-2zM898 501h2v1h-2zM900 500h2v1h-2zM902 499h2v1h-2zM904 498h1v1h-1zM905 497h2v1h-2zM907 496h1v1h-1zM908 495h2v1h-2zM910 494h2v1h-2zM912 493h2v1h-2zM914 492h2v1h-2zM916 491h2v1h-2zM918 490h3v1h-3zM921 489h1v1h-1zM922 489h2v1h-2zM924 488h3v1h-3zM927 487h1v1h-1zM928 487h2v1h-2zM930 486h3v1h-3zM933 485h1v1h-1zM934 485h4v1h-4zM938 484h2v1h-2zM940 484h4v1h-4zM944 483h2v1h-2zM946 483h2v1h-2zM948 482h3v1h-3zM951 481h1v1h-1zM952 481h4v1h-4zM956 480h2v1h-2zM958 480h6v1h-6zM964 480h4v1h-4zM968 479h3v1h-3z" fill="#e6e600"/>
<path d="M94 576h1v1h-1zM95 575h2v1h-2zM97 574h1v1h-1zM98 573h2v1h-2zM100 572h2v1h-2zM102 571h2v1h-2zM104 570h2v1h-2zM106 569h2v1h-2zM108 570h2v1h-2zM110 571h2v1h-2zM112 572v2h1v-2zM113 574v2h1v-2zM114 576v2h1v-2zM115 578v2h1v-2zM116 580v2h1v-2zM117 582v2h1v-2zM118 584v1h1v-1zM118 585v2h1v-2zM119 587v2h1v-2zM120 589v2h1v-2zM121 591v3h1v-3zM122 594v2h1v-2zM123 596v2h1v-2zM124 598v1h1v-1zM124 599h2v1h-2zM126 600h2v1h-2zM128 601h2v1h-2zM130 602h2v1h-2zM132 603h3v1h-3zM135 604h1v1h-1zM136 604v1h1v-1zM137 605v1h1v-1zM138 606v1h1v-1zM139 607v2h1v-2zM140 609v1h1v-1zM141 610v1h1v-1zM142 611h1v1h-1zM143 610h1v1h-1zM144 609h2v1h-2zM146 608h1v1h-1zM147 607h1v1h-1zM148 606h1v1h-1zM149 605h1v1h-1zM150 604h1v1h-1zM151 603h1v1h-1zM152 602h1v1h-1zM153 601h1v1h-1zM154 600h2v1h-2zM156 599h3v1h-3zM159 598h1v1h-1zM160 598v1h1v-1zM161 596v2h1v-2zM162 594v2h1v-2zM163 593v1h1v-1zM164 591v2h1v-2zM165 589v2h1v-2zM166 588v1h1v-1zM167 586v2h1v-2zM168 584v2h1v-2zM169 583v1h1v-1zM170 581v2h1v-2zM171 579v2h1v-2zM172 578h2v1h-2zM174 579h2v1h-2zM176 580h2v1h-2zM178 581h2v1h-2zM180 582h2v1h-2zM182 583h2v1h-2zM184 584h1v1h-1zM185 585h2v1h-2zM187 586h1v1h-1zM188 587h2v1h-2zM190 588h2v1h-2zM192 589h3v1h-3zM195 590h1v1h-1zM196 590v1h1v-1zM197 591v2h1v-2zM198 593v1h1v-1zM199 594v2h1v-2zM200 596v1h1v-1zM201 597v2h1v-2zM202 599h1v1h-1zM203 600h1v1h-1zM204 601h1v1h-1zM205 602h1v1h-1zM206 603h1v1h-1zM207 604h1v1h-1zM208 605v1h1v-1zM209 604v1h1v-1zM210 603v1h1v-1zM211 601v2h1v-2zM212 600v1h1v-1zM213 599v1h1v-1zM214 598h2v1h-2zM216 599h2v1h-2zM218 600h2v1h-2zM220 601h2v1h-2zM222 602h2v1h-2zM224 603h2v1h-2zM226 604h1v1h-1zM227 605h1v1h-1zM228 606h1v1h-1zM229 607h1v1h-1zM230 608h1v1h-1zM231 609h1v1h-1zM232 610h2v1h-2zM234 609h2v1h-2zM236 608h2v1h-2zM238 607h1v1h-1zM239 606h1v1h-1zM240 605h2v1h-2zM242 604h1v1h-1zM243 603h1v1h-1zM244 601v2h1v-2zM245 599v2h1v-2zM246 597v2h1v-2zM247 595v2h1v-2zM248 593v2h1v-2zM249 591v2h1v-2zM250 590v1h1v-1zM250 589v1h1v-1zM251 587v2h1v-2zM252 586v1h1v-1zM253 585v1h1v-1zM254 583v2h1v-2zM255 582v1h1v-1zM256 581v1h1v-1zM257 580v1h1v-1zM258 579v1h1v-1zM259 577v2h1v-2zM260 576v1h1v-1zM261 575v1h1v-1zM262 574h2v1h-2zM264 573h3v1h-3zM267 572h1v1h-1zM268 572h2v1h-2zM270 573h3v1h-3zM273 574h1v1h-1zM274 574h1v1h-1zM275 575h2v1h-2zM277 576h1v1h-1zM278 577h2v1h-2zM280 578h1v1h-1zM281 579h1v1h-1zM282 580h2v1h-2zM284 581h1v1h-1zM285 582h1v1h-1zM286 583h2v1h-2zM288 584h2v1h-2zM290 585h2v1h-2zM292 586h1v1h-1zM293 587h2v1h-2zM295 588h1v1h-1zM296 589h2v1h-2zM298 590h2v1h-2zM300 589h3v1h-3zM303 588h1v1h-1zM304 588h2v1h-2zM306 589h2v1h-2zM308 590h2v1h-2zM310 591h1v1h-1zM311 590h2v1h-2zM313 589h1v1h-1zM314 588h2v1h-2zM316 587v1h1v-1zM317 585v2h1v-2zM318 584v1h1v-1zM319 583v1h1v-1zM320 581v2h1v-2zM321 580v1h1v-1zM322 579h1v1h-1zM323 578h1v1h-1zM324 577h1v1h-1zM325 576h1v1h-1zM326 575h1v1h-1zM327 574h1v1h-1zM328 573h1v1h-1zM329 572h1v1h-1zM330 571h2v1h-2zM332 570h1v1h-1zM333 569h1v1h-1zM334 568h2v1h-2zM336 567h2v1h-2zM338 566h2v1h-2zM340 565h2v1h-2zM342 566h2v1h-2zM344 567h2v1h-2zM346 568h2v1h-2zM348 567h3v1h-3zM351 566h1v1h-1zM352 566h1v1h-1zM353 567h2v1h-2zM355 568h1v1h-1zM356 569h2v1h-2zM358 570h4v1h-4zM362 569h2v1h-2zM364 569h4v1h-4zM368 568h2v1h-2zM370 568h2v1h-2zM372 567h2v1h-2zM374 566h2v1h-2zM376 565h1v1h-1zM377 566h2v1h-2zM379 567h1v1h-1zM380 568h2v1h-2zM382 569h1v1h-1zM383 568h2v1h-2zM385 567h1v1h-1zM386 566h2v1h-2zM388 565h2v1h-2zM390 566h3v1h-3zM393 567h1v1h-1zM394 567h2v1h-2zM396 568h2v1h-2zM398 569h2v1h-2zM400 570h1v1h-1zM401 571h1v1h-1zM402 572h1v1h-1zM403 573h1v1h-1zM404 574h1v1h-1zM405 575h1v1h-1zM406 576h1v1h-1zM407 577h1v1h-1zM408 578h1v1h-1zM409 579h1v1h-1zM410 580h1v1h-1zM411 581h1v1h-1zM412 582v1h1v-1zM413 583v2h1v-2zM414 585v1h1v-1zM415 586v1h1v-1zM416 587v2h1v-2zM417 589v1h1v-1zM418 590v2h1v-2zM419 592v2h1v-2zM420 594v2h1v-2zM421 596v2h1v-2zM422 598v2h1v-2zM423 600v2h1v-2zM424 602h1v1h-1zM425 603h1v1h-1zM426 604h2v1h-2zM428 605h1v1h-1zM429 606h1v1h-1zM430 607h1v1h-1zM431 608h2v1h-2zM433 609h1v1h-1zM434 610h2v1h-2zM436 611h4v1h-4zM440 610h2v1h-2zM442 610h2v1h-2zM444 611h2v1h-2zM446 612h2v1h-2zM448 613h4v1h-4zM452 612h2v1h-2zM454 612h2v1h-2zM456 611h2v1h-2zM458 610h2v1h-2zM460 609h2v1h-2zM462 610h2v1h-2zM464 611h2v1h-2zM466 612h1v1h-1zM467 611h2v1h-2zM469 610h1v1h-1zM470 609h2v1h-2zM472 608h1v1h-1zM473 609h2v1h-2zM475 610h1v1h-1zM476 611h2v1h-2zM478 612h2v1h-2zM480 613h2v1h-2zM482 614h2v1h-2zM484 615h4v1h-4zM488 616h2v1h-2zM490 616v1h1v-1zM491 615v1h1v-1zM492 614v1h1v-1zM493 612v2h1v-2zM494 611v1h1v-1zM495 610v1h1v-1zM496 609v1h1v-1zM497 607v2h1v-2zM498 606v1h1v-1zM499 605v1h1v-1zM500 603v2h1v-2zM501 602v1h1v-1zM502 601h2v1h-2zM504 602h2v1h-2zM506 603h2v1h-2zM508 604h4v1h-4zM512 605h2v1h-2zM514 605h1v1h-1zM515 606h1v1h-1zM516 607h2v1h-2zM518 608h1v1h-1zM519 609h1v1h-1zM520 610h1v1h-1zM521 609h2v1h-2zM523 608h1v1h-1zM524 607h2v1h-2zM526 606h1v1h-1zM527 605h1v1h-1zM528 604h2v1h-2zM530 603h1v1h-1zM531 602h1v1h-1zM532 601h1v1h-1zM533 600h1v1h-1zM534 599h1v1h-1zM535 598h1v1h-1zM536 597h1v1h-1zM537 596h1v1h-1zM538 595h1v1h-1zM539 594h1v1h-1zM540 593h2v1h-2zM542 592h1v1h-1zM543 591h1v1h-1zM544 590v1h1v-1zM545 591v2h1v-2zM546 593v2h1v-2zM547 595v2h1v-2zM548 597v2h1v-2zM549 599v2h1v-2zM550 601h4v1h-4zM554 602h2v1h-2zM556 602h1v1h-1zM557 603h1v1h-1zM558 604h2v1h-2zM560 605h1v1h-1zM561 606h1v1h-1zM562 607h1v1h-1zM563 608h2v1h-2zM565 609h1v1h-1zM566 610h2v1h-2zM568 611h1v1h-1zM569 610h2v1h-2zM571 609h1v1h-1zM572 608h2v1h-2zM574 607h2v1h-2zM576 606h3v1h-3zM579 605h1v1h-1zM580 605h1v1h-1zM581 606h2v1h-2zM583 607h1v1h-1zM584 608h2v1h-2zM586 609h4v1h-4zM590 610h2v1h-2zM592 610h2v1h-2zM594 611h3v1h-3zM597 612h1v1h-1zM598 612h6v1h-6zM604 612h2v1h-2zM606 611h2v1h-2zM608 610h2v1h-2zM610 609h2v1h-2zM612 610h2v1h-2zM614 611h2v1h-2zM616 612h2v1h-2zM618 611h3v1h-3zM621 610h1v1h-1zM622 610h1v1h-1zM623 609h1v1h-1zM624 608h1v1h-1zM625 607h1v1h-1zM626 606h1v1h-1zM627 605h1v1h-1zM628 604h4v1h-4zM632 605h2v1h-2zM634 605v1h1v-1zM635 604v1h1v-1zM636 603v1h1v-1zM637 601v2h1v-2zM638 600v1h1v-1zM639 599v1h1v-1zM640 598v1h1v-1zM641 596v2h1v-2zM642 595v1h1v-1zM643 594v1h1v-1zM644 592v2h1v-2zM645 591v1h1v-1zM646 590h2v1h-2zM648 591h3v1h-3zM651 592h1v1h-1zM652 592h2v1h-2zM654 591h3v1h-3zM657 590h1v1h-1zM658 590v1h1v-1zM659 588v2h1v-2zM660 586v2h1v-2zM661 584v2h1v-2zM662 582v2h1v-2zM663 580v2h1v-2zM664 579h1v1h-1zM665 578h1v1h-1zM666 577h1v1h-1zM667 576h1v1h-1zM668 575h1v1h-1zM669 574h1v1h-1zM670 573h1v1h-1zM671 572h2v1h-2zM673 571h1v1h-1zM674 570h2v1h-2zM676 569h2v1h-2zM678 568h2v1h-2zM680 567h2v1h-2zM682 566h2v1h-2zM684 565h3v1h-3zM687 564h1v1h-1zM688 564h4v1h-4zM692 563h2v1h-2zM694 563h2v1h-2zM696 564h2v1h-2zM698 565h2v1h-2zM700 566h4v1h-4zM704 565h2v1h-2zM706 565h6v1h-6zM712 565h1v1h-1zM713 566h1v1h-1zM714 567h2v1h-2zM716 568h1v1h-1zM717 569h1v1h-1zM718 570v2h1v-2zM719 572v2h1v-2zM720 574v3h1v-3zM721 577v2h1v-2zM722 579v3h1v-3zM723 582v2h1v-2zM724 584v1h1v-1zM724 585v1h1v-1zM725 586v2h1v-2zM726 588v1h1v-1zM727 589v2h1v-2zM728 591v1h1v-1zM729 592v2h1v-2zM730 594v1h1v-1zM731 595v2h1v-2zM732 597v1h1v-1zM733 598v1h1v-1zM734 599v2h1v-2zM735 601v1h1v-1zM736 602v1h1v-1zM737 603v1h1v-1zM738 604v1h1v-1zM739 605v2h1v-2zM740 607v1h1v-1zM741 608v1h1v-1zM742 609h1v1h-1zM743 608h1v1h-1zM744 607h2v1h-2zM746 606h1v1h-1zM747 605h1v1h-1zM748 604h6v1h-6zM754 604h4v1h-4zM758 603h2v1h-2zM760 603h2v1h-2zM762 602h3v1h-3zM765 601h1v1h-1zM766 601h2v1h-2zM768 600h3v1h-3zM771 599h1v1h-1zM772 599v1h1v-1zM773 597v2h1v-2zM774 596v1h1v-1zM775 595v1h1v-1zM776 593v2h1v-2zM777 592v1h1v-1zM778 591v1h1v-1zM779 589v2h1v-2zM780 588v1h1v-1zM781 586v2h1v-2zM782 585v1h1v-1zM783 583v2h1v-2zM784 582h1v1h-1zM785 581h1v1h-1zM786 580h2v1h-2zM788 579h1v1h-1zM789 578h1v1h-1zM790 577h1v1h-1zM791 576h1v1h-1zM792 575h2v1h-2zM794 574h1v1h-1zM795 573h1v1h-1zM796 572h1v1h-1zM797 573h2v1h-2zM799 574h1v1h-1zM800 575h2v1h-2zM802 576h4v1h-4zM806 577h2v1h-2zM808 577h4v1h-4zM812 578h2v1h-2zM814 578v1h1v-1zM815 579v1h1v-1zM816 580v1h1v-1zM817 581v2h1v-2zM818 583v1h1v-1zM819 584v1h1v-1zM820 585v2h1v-2zM821 587v2h1v-2zM822 589v2h1v-2zM823 591v2h1v-2zM824 593v2h1v-2zM825 595v2h1v-2zM826 597v1h1v-1zM827 598v2h1v-2zM828 600v1h1v-1zM829 601v1h1v-1zM830 602v2h1v-2zM831 604v1h1v-1zM832 605h6v1h-6zM838 605h4v1h-4zM842 606h2v1h-2zM844 606h2v1h-2zM846 607h3v1h-3zM849 608h1v1h-1zM850 608h1v1h-1zM851 607h2v1h-2zM853 606h1v1h-1zM854 605h2v1h-2zM856 604h6v1h-6zM862 604v1h1v-1zM863 603v1h1v-1zM864 602v1h1v-1zM865 600v2h1v-2zM866 599v1h1v-1zM867 598v1h1v-1zM868 596v2h1v-2zM869 594v2h1v-2zM870 592v2h1v-2zM871 590v2h1v-2zM872 588v2h1v-2zM873 586v2h1v-2zM874 585h1v1h-1zM875 584h1v1h-1zM876 583h1v1h-1zM877 582h1v1h-1zM878 581h1v1h-1zM879 580h1v1h-1zM880 579v1h1v-1zM881 577v2h1v-2zM882 576v1h1v-1zM883 575v1h1v-1zM884 573v2h1v-2zM885 572v1h1v-1zM886 571h2v1h-2zM888 570h3v1h-3zM891 569h1v1h-1zM892 569h4v1h-4zM896 570h2v1h-2zM898 570h2v1h-2zM900 571h3v1h-3zM903 572h1v1h-1zM904 572h4v1h-4zM908 573h2v1h-2zM910 573h6v1h-6zM916 573v1h1v-1zM917 574v2h1v-2zM918 576v2h1v-2zM919 578v1h1v-1zM920 579v2h1v-2zM921 581v2h1v-2zM922 583v1h1v-1zM923 584v2h1v-2zM924 586v2h1v-2zM925 588v1h1v-1zM926 589v2h1v-2zM927 591v2h1v-2zM928 593h4v1h-4zM932 594h2v1h-2zM934 594h2v1h-2zM936 595h3v1h-3zM939 596h1v1h-1zM940 596h1v1h-1zM941 597h2v1h-2zM943 598h1v1h-1zM944 599h2v1h-2zM946 600h2v1h-2zM948 599h3v1h-3zM951 598h1v1h-1zM952 598h2v1h-2zM954 599h2v1h-2zM956 600h2v1h-2zM958 601h2v1h-2zM960 602h2v1h-2zM962 603h2v1h-2zM964 604h1v1h-1zM965 603h1v1h-1zM966 602h1v1h-1zM967 601h1v1h-1zM968 600h1v1h-1zM969 599h1v1h-1zM970 598h1v1h-1z" fill="#ffffff"/>
<path d="M94 587h1v1h-1zM95 586h1v1h-1zM96 585h1v1h-1zM97 584h1v1h-1zM98 583h1v1h-1zM99 582h1v1h-1zM100 581h1v1h-1zM101 580h2v1h-2zM103 579h1v1h-1zM104 578h2v1h-2zM106 577h4v1h-4zM110 576h2v1h-2zM112 576h1v1h-1zM113 577h2v1h-2zM115 578h1v1h-1zM116 579h2v1h-2zM118 580h1v1h-1zM119 581h1v1h-1zM120 582h1v1h-1zM121 583h1v1h-1zM122 584h1v1h-1zM123 585h1v1h-1zM124 586h1v1h-1zM125 587h1v1h-1zM126 588h2v1h-2zM128 589h1v1h-1zM129 590h1v1h-1zM130 591h1v1h-1zM131 592h1v1h-1zM132 593h2v1h-2zM134 594h1v1h-1zM135 595h1v1h-1zM136 596h1v1h-1zM137 597h2v1h-2zM139 598h1v1h-1zM140 599h2v1h-2zM142 600h2v1h-2zM144 601h2v1h-2zM146 602h2v1h-2zM148 603h6v1h-6zM154 603h2v1h-2zM156 602h3v1h-3zM159 601h1v1h-1zM160 601h1v1h-1zM161 600h2v1h-2zM163 599h1v1h-1zM164 598h2v1h-2zM166 597h1v1h-1zM167 596h1v1h-1zM168 595h1v1h-1zM169 594h1v1h-1zM170 593h1v1h-1zM171 592h1v1h-1zM172 591h2v1h-2zM174 590h2v1h-2zM176 589h2v1h-2zM178 588h4v1h-4zM182 587h2v1h-2zM184 587h6v1h-6zM190 587h4v1h-4zM194 588h2v1h-2zM196 588h1v1h-1zM197 589h2v1h-2zM199 590h1v1h-1zM200 591h2v1h-2zM202 592h1v1h-1zM203 593h2v1h-2zM205 594h1v1h-1zM206 595h2v1h-2zM208 596h4v1h-4zM212 597h2v1h-2zM214 597h4v1h-4zM218 598h2v1h-2zM220 598h2v1h-2zM222 599h3v1h-3zM225 600h1v1h-1zM226 600h1v1h-1zM227 601h2v1h-2zM229 602h1v1h-1zM230 603h2v1h-2zM232 604h4v1h-4zM236 605h2v1h-2zM238 605h4v1h-4zM242 604h2v1h-2zM244 604h1v1h-1zM245 603h1v1h-1zM246 602h2v1h-2zM248 601h1v1h-1zM249 600h1v1h-1zM250 599h1v1h-1zM251 598h1v1h-1zM252 597h1v1h-1zM253 596h1v1h-1zM254 595h1v1h-1zM255 594h1v1h-1zM256 593h1v1h-1zM257 592h1v1h-1zM258 591h1v1h-1zM259 590h1v1h-1zM260 589h1v1h-1zM261 588h1v1h-1zM262 587h1v1h-1zM263 586h1v1h-1zM264 585h2v1h-2zM266 584h1v1h-1zM267 583h1v1h-1zM268 582h2v1h-2zM270 581h2v1h-2zM272 580h2v1h-2zM274 579h6v1h-6zM280 579h4v1h-4zM284 580h2v1h-2zM286 580h2v1h-2zM288 581h3v1h-3zM291 582h1v1h-1zM292 582h2v1h-2zM294 583h3v1h-3zM297 584h1v1h-1zM298 584h4v1h-4zM302 585h2v1h-2zM304 585h2v1h-2zM306 586h3v1h-3zM309 587h1v1h-1zM310 587h6v1h-6zM316 587h2v1h-2zM318 586h2v1h-2zM320 585h2v1h-2zM322 584h2v1h-2zM324 583h2v1h-2zM326 582h2v1h-2zM328 581h1v1h-1zM329 580h2v1h-2zM331 579h1v1h-1zM332 578h2v1h-2zM334 577h1v1h-1zM335 576h2v1h-2zM337 575h1v1h-1zM338 574h2v1h-2zM340 573h2v1h-2zM342 572h3v1h-3zM345 571h1v1h-1zM346 571h4v1h-4zM350 570h2v1h-2zM352 570h6v1h-6zM358 570h4v1h-4zM362 569h2v1h-2zM364 569h4v1h-4zM368 568h2v1h-2zM370 568h6v1h-6zM376 568h6v1h-6zM382 568h4v1h-4zM386 567h2v1h-2zM388 567h6v1h-6zM394 567h4v1h-4zM398 568h2v1h-2zM400 568h2v1h-2zM402 569h2v1h-2zM404 570h2v1h-2zM406 571h2v1h-2zM408 572h2v1h-2zM410 573h2v1h-2zM412 574h1v1h-1zM413 575h1v1h-1zM414 576h1v1h-1zM415 577h1v1h-1zM416 578h1v1h-1zM417 579h1v1h-1zM418 580v1h1v-1zM419 581v1h1v-1zM420 582v1h1v-1zM421 583v2h1v-2zM422 585v1h1v-1zM423 586v1h1v-1zM424 587v1h1v-1zM425 588v1h1v-1zM426 589v1h1v-1zM427 590v2h1v-2zM428 592v1h1v-1zM429 593v1h1v-1zM430 594h1v1h-1zM431 595h1v1h-1zM432 596h2v1h-2zM434 597h1v1h-1zM435 598h1v1h-1zM436 599h1v1h-1zM437 600h2v1h-2zM439 601h1v1h-1zM440 602h2v1h-2zM442 603h2v1h-2zM444 604h2v1h-2zM446 605h2v1h-2zM448 606h2v1h-2zM450 607h3v1h-3zM453 608h1v1h-1zM454 608h6v1h-6zM460 608h2v1h-2zM462 609h3v1h-3zM465 610h1v1h-1zM466 610h4v1h-4zM470 609h2v1h-2zM472 609h4v1h-4zM476 610h2v1h-2zM478 610h2v1h-2zM480 611h3v1h-3zM483 612h1v1h-1zM484 612h4v1h-4zM488 613h2v1h-2zM490 613h2v1h-2zM492 612h3v1h-3zM495 611h1v1h-1zM496 611h2v1h-2zM498 610h2v1h-2zM500 609h2v1h-2zM502 608h2v1h-2zM504 607h3v1h-3zM507 606h1v1h-1zM508 606h6v1h-6zM514 606h2v1h-2zM516 607h3v1h-3zM519 608h1v1h-1zM520 608h2v1h-2zM522 607h3v1h-3zM525 606h1v1h-1zM526 606h4v1h-4zM530 605h2v1h-2zM532 605h2v1h-2zM534 604h2v1h-2zM536 603h2v1h-2zM538 602h1v1h-1zM539 601h2v1h-2zM541 600h1v1h-1zM542 599h2v1h-2zM544 598h4v1h-4zM548 599h2v1h-2zM550 599h4v1h-4zM554 600h2v1h-2zM556 600h2v1h-2zM558 601h3v1h-3zM561 602h1v1h-1zM562 602h2v1h-2zM564 603h2v1h-2zM566 604h2v1h-2zM568 605h4v1h-4zM572 606h2v1h-2zM574 606h4v1h-4zM578 605h2v1h-2zM580 605h2v1h-2zM582 606h3v1h-3zM585 607h1v1h-1zM586 607h4v1h-4zM590 608h2v1h-2zM592 608h4v1h-4zM596 609h2v1h-2zM598 609h4v1h-4zM602 610h2v1h-2zM604 610h6v1h-6zM610 610h6v1h-6zM616 610h6v1h-6zM622 610h2v1h-2zM624 609h3v1h-3zM627 608h1v1h-1zM628 608h2v1h-2zM630 607h3v1h-3zM633 606h1v1h-1zM634 606h2v1h-2zM636 605h3v1h-3zM639 604h1v1h-1zM640 604h1v1h-1zM641 603h1v1h-1zM642 602h2v1h-2zM644 601h1v1h-1zM645 600h1v1h-1zM646 599h2v1h-2zM648 598h3v1h-3zM651 597h1v1h-1zM652 597h2v1h-2zM654 596h3v1h-3zM657 595h1v1h-1zM658 595h1v1h-1zM659 594h1v1h-1zM660 593h2v1h-2zM662 592h1v1h-1zM663 591h1v1h-1zM664 590h1v1h-1zM665 589h1v1h-1zM666 588h1v1h-1zM667 587h1v1h-1zM668 586h1v1h-1zM669 585h1v1h-1zM670 584h1v1h-1zM671 583h1v1h-1zM672 582h1v1h-1zM673 581h1v1h-1zM674 580h1v1h-1zM675 579h1v1h-1zM676 578h1v1h-1zM677 577h2v1h-2zM679 576h1v1h-1zM680 575h2v1h-2zM682 574h2v1h-2zM684 573h2v1h-2zM686 572h2v1h-2zM688 571h2v1h-2zM690 570h3v1h-3zM693 569h1v1h-1zM694 569h4v1h-4zM698 568h2v1h-2zM700 568h4v1h-4zM704 567h2v1h-2zM706 567h4v1h-4zM710 566h2v1h-2zM712 566h2v1h-2zM714 567h3v1h-3zM717 568h1v1h-1zM718 568v1h1v-1zM719 569v2h1v-2zM720 571v1h1v-1zM721 572v1h1v-1zM722 573v2h1v-2zM723 575v1h1v-1zM724 576v1h1v-1zM725 577v2h1v-2zM726 579v1h1v-1zM727 580v1h1v-1zM728 581v2h1v-2zM729 583v1h1v-1zM730 584v1h1v-1zM731 585v1h1v-1zM732 586v1h1v-1zM733 587v2h1v-2zM734 589v1h1v-1zM735 590v1h1v-1zM736 591h1v1h-1zM737 592h2v1h-2zM739 593h1v1h-1zM740 594h2v1h-2zM742 595h2v1h-2zM744 596h2v1h-2zM746 597h2v1h-2zM748 598h2v1h-2zM750 599h3v1h-3zM753 600h1v1h-1zM754 600h4v1h-4zM758 601h2v1h-2zM760 601h6v1h-6zM766 601h6v1h-6zM772 601h2v1h-2zM774 600h2v1h-2zM776 599h2v1h-2zM778 598h1v1h-1zM779 597h1v1h-1zM780 596h2v1h-2zM782 595h1v1h-1zM783 594h1v1h-1zM784 593h1v1h-1zM785 592h1v1h-1zM786 591h2v1h-2zM788 590h1v1h-1zM789 589h1v1h-1zM790 588h1v1h-1zM791 587h1v1h-1zM792 586h1v1h-1zM793 585h1v1h-1zM794 584h1v1h-1zM795 583h1v1h-1zM796 582h2v1h-2zM798 581h3v1h-3zM801 580h1v1h-1zM802 580h4v1h-4zM806 579h2v1h-2zM808 579h6v1h-6zM814 579h4v1h-4zM818 580h2v1h-2zM820 580h1v1h-1zM821 581h1v1h-1zM822 582h2v1h-2zM824 583h1v1h-1zM825 584h1v1h-1zM826 585v1h1v-1zM827 586v1h1v-1zM828 587v1h1v-1zM829 588v2h1v-2zM830 590v1h1v-1zM831 591v1h1v-1zM832 592h1v1h-1zM833 593h2v1h-2zM835 594h1v1h-1zM836 595h2v1h-2zM838 596h2v1h-2zM840 597h2v1h-2zM842 598h2v1h-2zM844 599h2v1h-2zM846 600h2v1h-2zM848 601h2v1h-2zM850 602h4v1h-4zM854 603h2v1h-2zM856 603h6v1h-6zM862 603h2v1h-2zM864 602h2v1h-2zM866 601h2v1h-2zM868 600h1v1h-1zM869 599h1v1h-1zM870 598h2v1h-2zM872 597h1v1h-1zM873 596h1v1h-1zM874 595v1h1v-1zM875 594v1h1v-1zM876 593v1h1v-1zM877 591v2h1v-2zM878 590v1h1v-1zM879 589v1h1v-1zM880 588h1v1h-1zM881 587h1v1h-1zM882 586h1v1h-1zM883 585h1v1h-1zM884 584h1v1h-1zM885 583h1v1h-1zM886 582h1v1h-1zM887 581h2v1h-2zM889 580h1v1h-1zM890 579h2v1h-2zM892 578h2v1h-2zM894 577h2v1h-2zM896 576h2v1h-2zM898 575h4v1h-4zM902 574h2v1h-2zM904 574h6v1h-6zM910 574h6v1h-6zM916 574h2v1h-2zM918 575h3v1h-3zM921 576h1v1h-1zM922 576h1v1h-1zM923 577h1v1h-1zM924 578h1v1h-1zM925 579h1v1h-1zM926 580h1v1h-1zM927 581h1v1h-1zM928 582h1v1h-1zM929 583h2v1h-2zM931 584h1v1h-1zM932 585h2v1h-2zM934 586h1v1h-1zM935 587h2v1h-2zM937 588h1v1h-1zM938 589h2v1h-2zM940 590h2v1h-2zM942 591h2v1h-2zM944 592h2v1h-2zM946 593h2v1h-2zM948 594h3v1h-3zM951 595h1v1h-1zM952 595h2v1h-2zM954 596h3v1h-3zM957 597h1v1h-1zM958 597h2v1h-2zM960 598h2v1h-2zM962 599h2v1h-2zM964 600h4v1h-4zM968 599h3v1h-3z" fill="#e6e600"/>
<path d="M94 555h2v1h-2zM96 554h2v1h-2zM98 553h2v1h-2zM100 552h6v1h-6zM106 552v2h1v-2zM107 554v2h1v-2zM108 556v2h1v-2zM109 558v3h1v-3zM110 561v2h1v-2zM111 563v2h1v-2zM112 565v1h1v-1zM112 566v3h1v-3zM113 569v6h1v-6zM114 575v5h1v-5zM115 580v5h1v-5zM116 585v6h1v-6zM117 591v5h1v-5zM118 596v2h1v-2zM118 598v3h1v-3zM119 601v4h1v-4zM120 605v4h1v-4zM121 609v4h1v-4zM122 613v4h1v-4zM123 617v4h1v-4zM124 621v2h1v-2zM124 623h2v1h-2zM126 624h2v1h-2zM128 625h2v1h-2zM130 626h1v1h-1zM131 625h1v1h-1zM132 624h1v1h-1zM133 623h1v1h-1zM134 622h1v1h-1zM135 621h1v1h-1zM136 620v1h1v-1zM137 621v2h1v-2zM138 623v2h1v-2zM139 625v1h1v-1zM140 626v2h1v-2zM141 628v2h1v-2zM142 629v2h1v-2zM143 627v2h1v-2zM144 624v3h1v-3zM145 622v2h1v-2zM146 619v3h1v-3zM147 617v2h1v-2zM148 616v1h1v-1zM148 614v2h1v-2zM149 612v2h1v-2zM150 610v2h1v-2zM151 608v2h1v-2zM152 606v2h1v-2zM153 604v2h1v-2zM154 603v1h1v-1zM154 602h1v1h-1zM155 601h1v1h-1zM156 600h1v1h-1zM157 599h1v1h-1zM158 598h1v1h-1zM159 597h1v1h-1zM160 594v3h1v-3zM161 589v5h1v-5zM162 585v4h1v-4zM163 580v5h1v-5zM164 575v5h1v-5zM165 571v4h1v-4zM166 569v2h1v-2zM166 567v2h1v-2zM167 565v2h1v-2zM168 562v3h1v-3zM169 560v2h1v-2zM170 557v3h1v-3zM171 555v2h1v-2zM172 554v1h1v-1zM172 553v2h1v-2zM173 555v3h1v-3zM174 558v2h1v-2zM175 560v3h1v-3zM176 563v3h1v-3zM177 566v2h1v-2zM178 568v1h1v-1zM178 569v2h1v-2zM179 571v2h1v-2zM180 573v2h1v-2zM181 575v2h1v-2zM182 577v2h1v-2zM183 579v2h1v-2zM184 581v1h1v-1zM185 582v2h1v-2zM186 584v1h1v-1zM187 585v1h1v-1zM188 586v2h1v-2zM189 588v1h1v-1zM190 589h4v1h-4zM194 590h2v1h-2zM196 590v3h1v-3zM197 593v4h1v-4zM198 597v4h1v-4zM199 601v4h1v-4zM200 605v4h1v-4zM201 609v4h1v-4zM202 613v2h1v-2zM202 615v1h1v-1zM203 616v2h1v-2zM204 618v1h1v-1zM205 619v1h1v-1zM206 620v2h1v-2zM207 622v1h1v-1zM208 622v2h1v-2zM209 618v4h1v-4zM210 614v4h1v-4zM211 610v4h1v-4zM212 606v4h1v-4zM213 602v4h1v-4zM214 601v1h1v-1zM214 600h1v1h-1zM215 601h1v1h-1zM216 602h1v1h-1zM217 603h1v1h-1zM218 604h1v1h-1zM219 605h1v1h-1zM220 606v1h1v-1zM221 607v1h1v-1zM222 608v1h1v-1zM223 609v2h1v-2zM224 611v1h1v-1zM225 612v1h1v-1zM226 613v1h1v-1zM227 614v2h1v-2zM228 616v2h1v-2zM229 618v1h1v-1zM230 619v2h1v-2zM231 621v2h1v-2zM232 623v1h1v-1zM233 621v2h1v-2zM234 620v1h1v-1zM235 618v2h1v-2zM236 617v1h1v-1zM237 615v2h1v-2zM238 614v1h1v-1zM239 612v2h1v-2zM240 610v2h1v-2zM241 609v1h1v-1zM242 607v2h1v-2zM243 605v2h1v-2zM244 602v3h1v-3zM245 596v6h1v-6zM246 590v6h1v-6zM247 584v6h1v-6zM248 578v6h1v-6zM249 572v6h1v-6zM250 570v2h1v-2zM250 569v1h1v-1zM251 567v2h1v-2zM252 565v2h1v-2zM253 564v1h1v-1zM254 562v2h1v-2zM255 560v2h1v-2zM256 559v1h1v-1zM257 557v2h1v-2zM258 555v2h1v-2zM259 553v2h1v-2zM260 551v2h1v-2zM261 549v2h1v-2zM262 548h1v1h-1zM263 549h2v1h-2zM265 550h1v1h-1zM266 551h2v1h-2zM268 552v2h1v-2zM269 554v2h1v-2zM270 556v2h1v-2zM271 558v2h1v-2zM272 560v2h1v-2zM273 562v2h1v-2zM274 564v2h1v-2zM275 566v2h1v-2zM276 568v2h1v-2zM277 570v2h1v-2zM278 572v2h1v-2zM279 574v2h1v-2zM280 576v1h1v-1zM280 577v1h1v-1zM281 578v2h1v-2zM282 580v2h1v-2zM283 582v2h1v-2zM284 584v2h1v-2zM285 586v2h1v-2zM286 588h2v1h-2zM288 589h3v1h-3zM291 590h1v1h-1zM292 590v1h1v-1zM293 591v2h1v-2zM294 593v2h1v-2zM295 595v1h1v-1zM296 596v2h1v-2zM297 598v2h1v-2zM298 600v1h1v-1zM299 599v1h1v-1zM300 598v1h1v-1zM301 596v2h1v-2zM302 595v1h1v-1zM303 594v1h1v-1zM304 593h1v1h-1zM305 594h1v1h-1zM306 595h2v1h-2zM308 596h1v1h-1zM309 597h1v1h-1zM310 598v1h1v-1zM311 596v2h1v-2zM312 594v2h1v-2zM313 593v1h1v-1zM314 591v2h1v-2zM315 589v2h1v-2zM316 587v2h1v-2zM317 583v4h1v-4zM318 579v4h1v-4zM319 576v3h1v-3zM320 572v4h1v-4zM321 568v4h1v-4zM322 567v1h1v-1zM322 566v1h1v-1zM323 564v2h1v-2zM324 562v2h1v-2zM325 561v1h1v-1zM326 559v2h1v-2zM327 557v2h1v-2zM328 556h2v1h-2zM330 555h2v1h-2zM332 554h2v1h-2zM334 553h2v1h-2zM336 552h2v1h-2zM338 551h2v1h-2zM340 550v1h1v-1zM341 551v2h1v-2zM342 553v1h1v-1zM343 554v2h1v-2zM344 556v1h1v-1zM345 557v2h1v-2zM346 559h4v1h-4zM350 558h2v1h-2zM352 558v2h1v-2zM353 560v2h1v-2zM354 562v2h1v-2zM355 564v2h1v-2zM356 566v2h1v-2zM357 568v2h1v-2zM358 570h2v1h-2zM360 569h3v1h-3zM363 568h1v1h-1zM364 568h2v1h-2zM366 567h2v1h-2zM368 566h2v1h-2zM370 565h1v1h-1zM371 564h1v1h-1zM372 563h2v1h-2zM374 562h1v1h-1zM375 561h1v1h-1zM376 560v1h1v-1zM377 561v2h1v-2zM378 563v2h1v-2zM379 565v2h1v-2zM380 567v2h1v-2zM381 569v2h1v-2zM382 571v1h1v-1zM383 569v2h1v-2zM384 567v2h1v-2zM385 566v1h1v-1zM386 564v2h1v-2zM387 562v2h1v-2zM388 561h1v1h-1zM389 562h1v1h-1zM390 563h2v1h-2zM392 564h1v1h-1zM393 565h1v1h-1zM394 566v1h1v-1zM395 567v2h1v-2zM396 569v1h1v-1zM397 570v1h1v-1zM398 571v2h1v-2zM399 573v1h1v-1zM400 574v2h1v-2zM401 576v2h1v-2zM402 578v2h1v-2zM403 580v2h1v-2zM404 582v2h1v-2zM405 584v2h1v-2zM406 586v1h1v-1zM407 587v2h1v-2zM408 589v2h1v-2zM409 591v1h1v-1zM410 592v2h1v-2zM411 594v2h1v-2zM412 596v2h1v-2zM413 598v2h1v-2zM414 600v3h1v-3zM415 603v2h1v-2zM416 605v3h1v-3zM417 608v2h1v-2zM418 610v1h1v-1zM418 611v2h1v-2zM419 613v3h1v-3zM420 616v3h1v-3zM421 619v3h1v-3zM422 622v3h1v-3zM423 625v3h1v-3zM424 628v1h1v-1zM424 629h2v1h-2zM426 630h2v1h-2zM428 631h2v1h-2zM430 632h6v1h-6zM436 632v1h1v-1zM437 630v2h1v-2zM438 629v1h1v-1zM439 628v1h1v-1zM440 626v2h1v-2zM441 625v1h1v-1zM442 624h2v1h-2zM444 625h3v1h-3zM447 626h1v1h-1zM448 626v1h1v-1zM449 625v1h1v-1zM450 624v1h1v-1zM451 622v2h1v-2zM452 621v1h1v-1zM453 620v1h1v-1zM454 619v1h1v-1zM455 617v2h1v-2zM456 616v1h1v-1zM457 614v2h1v-2zM458 613v1h1v-1zM459 611v2h1v-2zM460 610v1h1v-1zM461 611v2h1v-2zM462 613v1h1v-1zM463 614v1h1v-1zM464 615v2h1v-2zM465 617v1h1v-1zM466 617v2h1v-2zM467 615v2h1v-2zM468 613v2h1v-2zM469 611v2h1v-2zM470 609v2h1v-2zM471 607v2h1v-2zM472 606v1h1v-1zM472 605v1h1v-1zM473 606v2h1v-2zM474 608v2h1v-2zM475 610v2h1v-2zM476 612v2h1v-2zM477 614v2h1v-2zM478 616v1h1v-1zM479 617v1h1v-1zM480 618v1h1v-1zM481 619v2h1v-2zM482 621v1h1v-1zM483 622v1h1v-1zM484 623h2v1h-2zM486 622h3v1h-3zM489 621h1v1h-1zM490 620v2h1v-2zM491 617v3h1v-3zM492 614v3h1v-3zM493 611v3h1v-3zM494 608v3h1v-3zM495 605v3h1v-3zM496 604v1h1v-1zM496 602v2h1v-2zM497 599v3h1v-3zM498 596v3h1v-3zM499 594v2h1v-2zM500 591v3h1v-3zM501 588v3h1v-3zM502 587v1h1v-1zM502 586v2h1v-2zM503 588v2h1v-2zM504 590v2h1v-2zM505 592v3h1v-3zM506 595v2h1v-2zM507 597v2h1v-2zM508 599v1h1v-1zM508 600h2v1h-2zM510 601h2v1h-2zM512 602h2v1h-2zM514 603v1h1v-1zM515 604v2h1v-2zM516 606v2h1v-2zM517 608v2h1v-2zM518 610v2h1v-2zM519 612v2h1v-2zM520 614v1h1v-1zM521 612v2h1v-2zM522 611v1h1v-1zM523 609v2h1v-2zM524 608v1h1v-1zM525 606v2h1v-2zM526 605v1h1v-1zM527 603v2h1v-2zM528 601v2h1v-2zM529 599v2h1v-2zM530 597v2h1v-2zM531 595v2h1v-2zM532 594v1h1v-1zM533 592v2h1v-2zM534 590v2h1v-2zM535 589v1h1v-1zM536 587v2h1v-2zM537 585v2h1v-2zM538 584v1h1v-1zM539 582v2h1v-2zM540 580v2h1v-2zM541 578v2h1v-2zM542 576v2h1v-2zM543 574v2h1v-2zM544 573v3h1v-3zM545 576v5h1v-5zM546 581v5h1v-5zM547 586v6h1v-6zM548 592v5h1v-5zM549 597v5h1v-5zM550 602v2h1v-2zM550 604h6v1h-6zM556 604v2h1v-2zM557 606v2h1v-2zM558 608v2h1v-2zM559 610v2h1v-2zM560 612v2h1v-2zM561 614v2h1v-2zM562 616v1h1v-1zM562 617h1v1h-1zM563 618h1v1h-1zM564 619h2v1h-2zM566 620h1v1h-1zM567 621h1v1h-1zM568 622v1h1v-1zM569 620v2h1v-2zM570 618v2h1v-2zM571 616v2h1v-2zM572 614v2h1v-2zM573 612v2h1v-2zM574 611h1v1h-1zM575 610h1v1h-1zM576 609h1v1h-1zM577 608h1v1h-1zM578 607h1v1h-1zM579 606h1v1h-1zM580 605v1h1v-1zM581 606v2h1v-2zM582 608v1h1v-1zM583 609v2h1v-2zM584 611v1h1v-1zM585 612v2h1v-2zM586 614h6v1h-6zM592 614h2v1h-2zM594 615h3v1h-3zM597 616h1v1h-1zM598 616h6v1h-6zM604 616v1h1v-1zM605 614v2h1v-2zM606 613v1h1v-1zM607 612v1h1v-1zM608 610v2h1v-2zM609 609v1h1v-1zM610 608h1v1h-1zM611 609h1v1h-1zM612 610h1v1h-1zM613 611h1v1h-1zM614 612h1v1h-1zM615 613h1v1h-1zM616 614h1v1h-1zM617 613h2v1h-2zM619 612h1v1h-1zM620 611h2v1h-2zM622 609v2h1v-2zM623 607v2h1v-2zM624 605v2h1v-2zM625 602v3h1v-3zM626 600v2h1v-2zM627 598v2h1v-2zM628 597v1h1v-1zM628 596h1v1h-1zM629 597h2v1h-2zM631 598h1v1h-1zM632 599h2v1h-2zM634 599v2h1v-2zM635 597v2h1v-2zM636 594v3h1v-3zM637 592v2h1v-2zM638 589v3h1v-3zM639 587v2h1v-2zM640 586v1h1v-1zM640 584v2h1v-2zM641 582v2h1v-2zM642 580v2h1v-2zM643 577v3h1v-3zM644 575v2h1v-2zM645 573v2h1v-2zM646 572v1h1v-1zM646 571v2h1v-2zM647 573v2h1v-2zM648 575v2h1v-2zM649 577v2h1v-2zM650 579v2h1v-2zM651 581v2h1v-2zM652 583h4v1h-4zM656 582h2v1h-2zM658 581v2h1v-2zM659 577v4h1v-4zM660 573v4h1v-4zM661 570v3h1v-3zM662 566v4h1v-4zM663 562v4h1v-4zM664 561v1h1v-1zM664 560v1h1v-1zM665 558v2h1v-2zM666 557v1h1v-1zM667 555v2h1v-2zM668 554v1h1v-1zM669 552v2h1v-2zM670 551h2v1h-2zM672 550h2v1h-2zM674 549h2v1h-2zM676 548h2v1h-2zM678 549h3v1h-3zM681 550h1v1h-1zM682 550h6v1h-6zM688 550h2v1h-2zM690 551h3v1h-3zM693 552h1v1h-1zM694 552v2h1v-2zM695 554v2h1v-2zM696 556v2h1v-2zM697 558v2h1v-2zM698 560v2h1v-2zM699 562v2h1v-2zM700 564h1v1h-1zM701 563h2v1h-2zM703 562h1v1h-1zM704 561h2v1h-2zM706 560h2v1h-2zM708 561h2v1h-2zM710 562h2v1h-2zM712 563v1h1v-1zM713 564v2h1v-2zM714 566v2h1v-2zM715 568v2h1v-2zM716 570v2h1v-2zM717 572v2h1v-2zM718 574v4h1v-4zM719 578v6h1v-6zM720 584v6h1v-6zM721 590v6h1v-6zM722 596v6h1v-6zM723 602v6h1v-6zM724 608v3h1v-3zM724 611v2h1v-2zM725 613v2h1v-2zM726 615v2h1v-2zM727 617v2h1v-2zM728 619v2h1v-2zM729 621v2h1v-2zM730 623v1h1v-1zM731 624v1h1v-1zM732 625v1h1v-1zM733 626v2h1v-2zM734 628v1h1v-1zM735 629v1h1v-1zM736 630h1v1h-1zM737 631h1v1h-1zM738 632h1v1h-1zM739 633h1v1h-1zM740 634h1v1h-1zM741 635h1v1h-1zM742 635v2h1v-2zM743 631v4h1v-4zM744 628v3h1v-3zM745 625v3h1v-3zM746 621v4h1v-4zM747 618v3h1v-3zM748 617v1h1v-1zM748 616h1v1h-1zM749 615h2v1h-2zM751 614h1v1h-1zM752 613h2v1h-2zM754 612h1v1h-1zM755 611h1v1h-1zM756 610h1v1h-1zM757 609h1v1h-1zM758 608h1v1h-1zM759 607h1v1h-1zM760 606h1v1h-1zM761 605h2v1h-2zM763 604h1v1h-1zM764 603h2v1h-2zM766 602h1v1h-1zM767 601h1v1h-1zM768 600h2v1h-2zM770 599h1v1h-1zM771 598h1v1h-1zM772 596v2h1v-2zM773 594v2h1v-2zM774 592v2h1v-2zM775 589v3h1v-3zM776 587v2h1v-2zM777 585v2h1v-2zM778 584v1h1v-1zM778 582v2h1v-2zM779 578v4h1v-4zM780 575v3h1v-3zM781 571v4h1v-4zM782 568v3h1v-3zM783 564v4h1v-4zM784 563v1h1v-1zM784 562v1h1v-1zM785 561v1h1v-1zM786 560v1h1v-1zM787 558v2h1v-2zM788 557v1h1v-1zM789 556v1h1v-1zM790 555h1v1h-1zM791 554h1v1h-1zM792 553h2v1h-2zM794 552h1v1h-1zM795 551h1v1h-1zM796 550v2h1v-2zM797 552v3h1v-3zM798 555v2h1v-2zM799 557v3h1v-3zM800 560v3h1v-3zM801 563v2h1v-2zM802 565v1h1v-1zM802 566v1h1v-1zM803 567v2h1v-2zM804 569v1h1v-1zM805 570v1h1v-1zM806 571v2h1v-2zM807 573v1h1v-1zM808 574h2v1h-2zM810 575h3v1h-3zM813 576h1v1h-1zM814 576v2h1v-2zM815 578v3h1v-3zM816 581v3h1v-3zM817 584v3h1v-3zM818 587v3h1v-3zM819 590v3h1v-3zM820 593v1h1v-1zM820 594v3h1v-3zM821 597v4h1v-4zM822 601v4h1v-4zM823 605v4h1v-4zM824 609v4h1v-4zM825 613v4h1v-4zM826 617v2h1v-2zM826 619v2h1v-2zM827 621v2h1v-2zM828 623v2h1v-2zM829 625v2h1v-2zM830 627v2h1v-2zM831 629v2h1v-2zM832 631v1h1v-1zM833 629v2h1v-2zM834 627v2h1v-2zM835 626v1h1v-1zM836 624v2h1v-2zM837 622v2h1v-2zM838 621h2v1h-2zM840 620h3v1h-3zM843 619h1v1h-1zM844 619h4v1h-4zM848 618h2v1h-2zM850 617v2h1v-2zM851 615v2h1v-2zM852 613v2h1v-2zM853 610v3h1v-3zM854 608v2h1v-2zM855 606v2h1v-2zM856 605v1h1v-1zM856 604h6v1h-6zM862 603v2h1v-2zM863 601v2h1v-2zM864 598v3h1v-3zM865 596v2h1v-2zM866 593v3h1v-3zM867 591v2h1v-2zM868 590v1h1v-1zM868 587v3h1v-3zM869 583v4h1v-4zM870 579v4h1v-4zM871 575v4h1v-4zM872 571v4h1v-4zM873 567v4h1v-4zM874 565v2h1v-2zM874 564h1v1h-1zM875 563h1v1h-1zM876 562h1v1h-1zM877 561h1v1h-1zM878 560h1v1h-1zM879 559h1v1h-1zM880 558v1h1v-1zM881 556v2h1v-2zM882 554v2h1v-2zM883 553v1h1v-1zM884 551v2h1v-2zM885 549v2h1v-2zM886 548h6v1h-6zM892 548v1h1v-1zM893 549v2h1v-2zM894 551v2h1v-2zM895 553v1h1v-1zM896 554v2h1v-2zM897 556v2h1v-2zM898 558v1h1v-1zM899 559v2h1v-2zM900 561v1h1v-1zM901 562v1h1v-1zM902 563v2h1v-2zM903 565v1h1v-1zM904 566h1v1h-1zM905 567h2v1h-2zM907 568h1v1h-1zM908 569h2v1h-2zM910 570h2v1h-2zM912 571h3v1h-3zM915 572h1v1h-1zM916 572v3h1v-3zM917 575v4h1v-4zM918 579v4h1v-4zM919 583v4h1v-4zM920 587v4h1v-4zM921 591v4h1v-4zM922 595v2h1v-2zM922 597v2h1v-2zM923 599v3h1v-3zM924 602v3h1v-3zM925 605v4h1v-4zM926 609v3h1v-3zM927 612v3h1v-3zM928 615v1h1v-1zM928 616h1v1h-1zM929 615h1v1h-1zM930 614h1v1h-1zM931 613h1v1h-1zM932 612h1v1h-1zM933 611h1v1h-1zM934 610h4v1h-4zM938 609h2v1h-2zM940 609h1v1h-1zM941 610h1v1h-1zM942 611h2v1h-2zM944 612h1v1h-1zM945 613h1v1h-1zM946 614v1h1v-1zM947 612v2h1v-2zM948 611v1h1v-1zM949 609v2h1v-2zM950 608v1h1v-1zM951 606v2h1v-2zM952 605v1h1v-1zM953 606v1h1v-1zM954 607v1h1v-1zM955 608v2h1v-2zM956 610v1h1v-1zM957 611v1h1v-1zM958 612h2v1h-2zM960 613h3v1h-3zM963 614h1v1h-1zM964 613v2h1v-2zM965 610v3h1v-3zM966 608v2h1v-2zM967 605v3h1v-3zM968 602v3h1v-3zM969 600v2h1v-2zM970 598v2h1v-2z" fill="#e628e6"/><rect x="104" y="142" width="7" height="1" fill="#fff"/><rect x="106" y="140" width="1" height="4" fill="#fff"/><rect x="386" y="59" width="7" height="1" fill="#fff"/><rect x="388" y="57" width="1" height="4" fill="#fff"/><rect x="146" y="224" width="7" height="1" fill="#fff"/><rect x="148" y="222" width="1" height="4" fill="#fff"/><rect x="746" y="370" width="7" height="1" fill="#fff"/><rect x="748" y="368" width="1" height="4" fill="#fff"/></g>
<rect x="2" y="2" width="18" height="48" fill="#222226"/><rect x="2" y="51" width="18" height="46" fill="#3c3d48"/><rect x="2" y="98" width="18" height="50" fill="#222226"/><rect x="2" y="149" width="18" height="64" fill="#222226"/><text x="10" y="17.5" text-anchor="middle" fill="#b4b4b4" class="cj">分</text><text x="10" y="31.8" text-anchor="middle" fill="#b4b4b4" class="cj">时</text><text x="10" y="46.1" text-anchor="middle" fill="#b4b4b4" class="cj">图</text><text x="10" y="65.5" text-anchor="middle" fill="#ffffff" class="cj">K</text><text x="10" y="79.8" text-anchor="middle" fill="#ffffff" class="cj">线</text><text x="10" y="94.1" text-anchor="middle" fill="#ffffff" class="cj">图</text><text x="10" y="116.0" text-anchor="middle" fill="#b4b4b4" class="cj">闪</text><text x="10" y="130.3" text-anchor="middle" fill="#b4b4b4" class="cj">电</text><text x="10" y="144.6" text-anchor="middle" fill="#b4b4b4" class="cj">图</text><text x="10" y="167.0" text-anchor="middle" fill="#b4b4b4" class="cj">合</text><text x="10" y="181.3" text-anchor="middle" fill="#b4b4b4" class="cj">约</text><text x="10" y="195.6" text-anchor="middle" fill="#b4b4b4" class="cj">资</text><text x="10" y="209.9" text-anchor="middle" fill="#b4b4b4" class="cj">料</text>
<rect x="60" y="657" width="39" height="16" fill="#3c3d4a"/><rect x="242" y="657" width="64" height="16" fill="#3c3d4a"/><rect x="99" y="657" width="1" height="16" fill="#2e2e2e"/><rect x="157" y="657" width="1" height="16" fill="#2e2e2e"/><rect x="197" y="657" width="1" height="16" fill="#2e2e2e"/><rect x="219" y="657" width="1" height="16" fill="#2e2e2e"/><rect x="241" y="657" width="1" height="16" fill="#2e2e2e"/><rect x="369" y="657" width="1" height="16" fill="#2e2e2e"/>
<g stroke="#e0a030" stroke-width="1" fill="none"><circle cx="205.5" cy="11.5" r="4"/><path d="M201.5 11.5H209.5M205.5 7.5V15.5"/></g><rect x="217.5" y="1.5" width="11" height="12" fill="#f4f4ff" stroke="#3048d0" stroke-width="1"/><polyline points="219,8 221,5 223,7 225,4 227,5" fill="none" stroke="#e02020" stroke-width="1.2"/><polyline points="219,11 221,8.5 223,10.5 225,8 227,9" fill="none" stroke="#2040e0" stroke-width="1.2"/><rect x="938.5" y="1.5" width="13" height="13" fill="none" stroke="#9c9c9c" stroke-width="1"/><rect x="954.5" y="1.5" width="13" height="13" fill="none" stroke="#9c9c9c" stroke-width="1"/><rect x="970.5" y="1.5" width="13" height="13" fill="none" stroke="#9c9c9c" stroke-width="1"/><rect x="986.5" y="1.5" width="13" height="13" fill="none" stroke="#9c9c9c" stroke-width="1"/><g fill="#9c9c9c"><rect x="944" y="3" width="2" height="3"/><rect x="944" y="7" width="2" height="2"/><rect x="944" y="10" width="2" height="3"/><rect x="940" y="7" width="3" height="2"/><rect x="947" y="7" width="3" height="2"/></g><g stroke="#9c9c9c" stroke-width="1" fill="#9c9c9c"><path d="M957.5 4V12M956 11.5H965" fill="none"/><path d="M957.5 2.5l-1.5 2h3zM957.5 13l-1.5-2h3zM966 11.5l-2-1.5v3zM955.5 11.5l2-1.5v3z" stroke="none"/><path d="M960.5 4V10" fill="none"/><path d="M964.5 4v6l-3-3z" stroke="none"/></g><g stroke="#9c9c9c" stroke-width="1" fill="#9c9c9c"><path d="M973.5 4V12M972 11.5H981" fill="none"/><path d="M973.5 2.5l-1.5 2h3zM973.5 13l-1.5-2h3zM982 11.5l-2-1.5v3zM971.5 11.5l2-1.5v3z" stroke="none"/><path d="M976.5 4v7l4.5-3.5z" stroke="none"/></g><g stroke="#9c9c9c" stroke-width="1" fill="none"><rect x="988.5" y="3.5" width="3" height="9"/><path d="M990 7.5H996"/><path d="M997.5 7.5l-3-2.5v5z" fill="#9c9c9c" stroke="none"/></g><circle cx="29" cy="533" r="3.2" fill="#fff"/><circle cx="29" cy="533" r="1.9" fill="#f00"/><line x1="34.3" y1="533.0" x2="36.2" y2="533.0" stroke="#f00" stroke-width="1.1"/><line x1="32.7" y1="536.7" x2="34.1" y2="538.1" stroke="#f00" stroke-width="1.1"/><line x1="29.0" y1="538.3" x2="29.0" y2="540.2" stroke="#f00" stroke-width="1.1"/><line x1="25.3" y1="536.7" x2="23.9" y2="538.1" stroke="#f00" stroke-width="1.1"/><line x1="23.7" y1="533.0" x2="21.8" y2="533.0" stroke="#f00" stroke-width="1.1"/><line x1="25.3" y1="529.3" x2="23.9" y2="527.9" stroke="#f00" stroke-width="1.1"/><line x1="29.0" y1="527.7" x2="29.0" y2="525.8" stroke="#f00" stroke-width="1.1"/><line x1="32.7" y1="529.3" x2="34.1" y2="527.9" stroke="#f00" stroke-width="1.1"/><rect x="1069" y="40" width="1" height="26" fill="#333"/>
<text x="86.4" y="24.7" fill="#ee3048" class="t" text-anchor="end" >82.30</text><text x="1004.3" y="24.7" fill="#ee3048" class="t" text-anchor="start" >82.30</text><text x="86.4" y="86.7" fill="#ee3048" class="t" text-anchor="end" >77.45</text><text x="1004.3" y="86.7" fill="#ee3048" class="t" text-anchor="start" >77.45</text><text x="86.4" y="148.7" fill="#ee3048" class="t" text-anchor="end" >72.61</text><text x="1004.3" y="148.7" fill="#ee3048" class="t" text-anchor="start" >72.61</text><text x="86.4" y="210.7" fill="#ee3048" class="t" text-anchor="end" >67.76</text><text x="1004.3" y="210.7" fill="#ee3048" class="t" text-anchor="start" >67.76</text><text x="86.4" y="272.7" fill="#ee3048" class="t" text-anchor="end" >62.91</text><text x="1004.3" y="272.7" fill="#ee3048" class="t" text-anchor="start" >62.91</text><text x="86.4" y="334.7" fill="#ee3048" class="t" text-anchor="end" >58.06</text><text x="1004.3" y="334.7" fill="#ee3048" class="t" text-anchor="start" >58.06</text><text x="86.4" y="418.7" fill="#ee3048" class="t" text-anchor="end" >2.17</text><text x="1004.3" y="418.7" fill="#ee3048" class="t" text-anchor="start" >2.17</text><text x="86.4" y="445.7" fill="#ee3048" class="t" text-anchor="end" >1.08</text><text x="1004.3" y="445.7" fill="#ee3048" class="t" text-anchor="start" >1.08</text><text x="86.4" y="473.7" fill="#ee3048" class="t" text-anchor="end" >-0.00</text><text x="1004.3" y="473.7" fill="#ee3048" class="t" text-anchor="start" >-0.00</text><text x="86.4" y="500.7" fill="#ee3048" class="t" text-anchor="end" >-1.09</text><text x="1004.3" y="500.7" fill="#ee3048" class="t" text-anchor="start" >-1.09</text><text x="86.4" y="550.7" fill="#ee3048" class="t" text-anchor="end" >109.98</text><text x="1004.3" y="550.7" fill="#ee3048" class="t" text-anchor="start" >109.98</text><text x="86.4" y="580.7" fill="#ee3048" class="t" text-anchor="end" >67.67</text><text x="1004.3" y="580.7" fill="#ee3048" class="t" text-anchor="start" >67.67</text><text x="86.4" y="610.7" fill="#ee3048" class="t" text-anchor="end" >25.35</text><text x="1004.3" y="610.7" fill="#ee3048" class="t" text-anchor="start" >25.35</text><text x="92.5" y="14" fill="#ffffff" class="cj" text-anchor="start" >美原油连续</text><text x="152.5" y="14" fill="#e8b040" class="cj" text-anchor="start" >【日线】</text><text x="233" y="14" fill="#ffffff" class="t" text-anchor="start"  textLength="123" lengthAdjust="spacingAndGlyphs">BOLL(20,2) MID:61.37</text><text x="366" y="14" fill="#d2d200" class="t" text-anchor="start"  textLength="70.6" lengthAdjust="spacingAndGlyphs">UPPER:63.89</text><text x="445.8" y="14" fill="#e628e6" class="t" text-anchor="start"  textLength="75.6" lengthAdjust="spacingAndGlyphs">LOWER:58.85</text><text x="92.7" y="408" fill="#ffffff" class="t" text-anchor="start"  textLength="84.6" lengthAdjust="spacingAndGlyphs">MACD(26,12,9)</text><text x="182.9" y="408" fill="#ffffff" class="t" text-anchor="start"  textLength="55.4" lengthAdjust="spacingAndGlyphs">DIFF:-0.22</text><text x="248.2" y="408" fill="#d2d200" class="t" text-anchor="start"  textLength="54.2" lengthAdjust="spacingAndGlyphs">DEA:-0.36</text><text x="312.1" y="408" fill="#e628e6" class="t" text-anchor="start"  textLength="62.2" lengthAdjust="spacingAndGlyphs">MACD:0.28</text><text x="92.7" y="540" fill="#ffffff" class="t" text-anchor="start"  textLength="55.4" lengthAdjust="spacingAndGlyphs">KDJ(9,3,3)</text><text x="153.7" y="540" fill="#ffffff" class="t" text-anchor="start"  textLength="40.4" lengthAdjust="spacingAndGlyphs">K:38.37</text><text x="204.2" y="540" fill="#d2d200" class="t" text-anchor="start"  textLength="41.2" lengthAdjust="spacingAndGlyphs">D:37.15</text><text x="254.8" y="540" fill="#e628e6" class="t" text-anchor="start"  textLength="37.9" lengthAdjust="spacingAndGlyphs">J:40.82</text><text x="210" y="649.7" fill="#c4c8cc" class="b" text-anchor="start"  textLength="44.2" lengthAdjust="spacingAndGlyphs">2024/12</text><text x="336" y="649.7" fill="#c4c8cc" class="b" text-anchor="start"  textLength="44.2" lengthAdjust="spacingAndGlyphs">2025/01</text><text x="468.5" y="649.7" fill="#c4c8cc" class="b" text-anchor="start"  textLength="44.2" lengthAdjust="spacingAndGlyphs">2025/02</text><text x="588.5" y="649.7" fill="#c4c8cc" class="b" text-anchor="start"  textLength="44.2" lengthAdjust="spacingAndGlyphs">2025/03</text><text x="714.5" y="649.7" fill="#c4c8cc" class="b" text-anchor="start"  textLength="44.2" lengthAdjust="spacingAndGlyphs">2025/04</text><text x="840.5" y="649.7" fill="#c4c8cc" class="b" text-anchor="start"  textLength="44.2" lengthAdjust="spacingAndGlyphs">2025/05</text><text x="34.5" y="653" fill="#f0b040" class="cjb" text-anchor="start"  textLength="24.6" lengthAdjust="spacingAndGlyphs">日线</text><path d="M65.2 652.5 L69.4 644 L73.6 652.5 Z" fill="#f0b040"/><text x="28" y="669.5" fill="#b4b4b4" class="cj" text-anchor="start" >指标</text><text x="68" y="669.5" fill="#ffffff" class="cj" text-anchor="start" >模板</text><text x="108" y="669.5" fill="#f0b040" class="sim" text-anchor="start"  textLength="18" lengthAdjust="spacingAndGlyphs">VIP</text><text x="127" y="669.5" fill="#f0b040" class="cj" text-anchor="start" >指标</text><text x="166" y="669.5" fill="#b4b4b4" class="cj" text-anchor="start" >标准</text><text x="205.5" y="669.5" fill="#b4b4b4" class="sim" text-anchor="start" >1</text><text x="227.5" y="669.5" fill="#b4b4b4" class="sim" text-anchor="start" >2</text><text x="250" y="669.5" fill="#ffffff" class="cj" text-anchor="start" >另存模板</text><text x="314" y="669.5" fill="#d0d0d0" class="cj" text-anchor="start" >管理模板</text><text x="942" y="647" fill="#e4e9f2" style="font:29px 'Liberation Sans',sans-serif;letter-spacing:3.2px">FX678</text>
</svg>
</body></html>
